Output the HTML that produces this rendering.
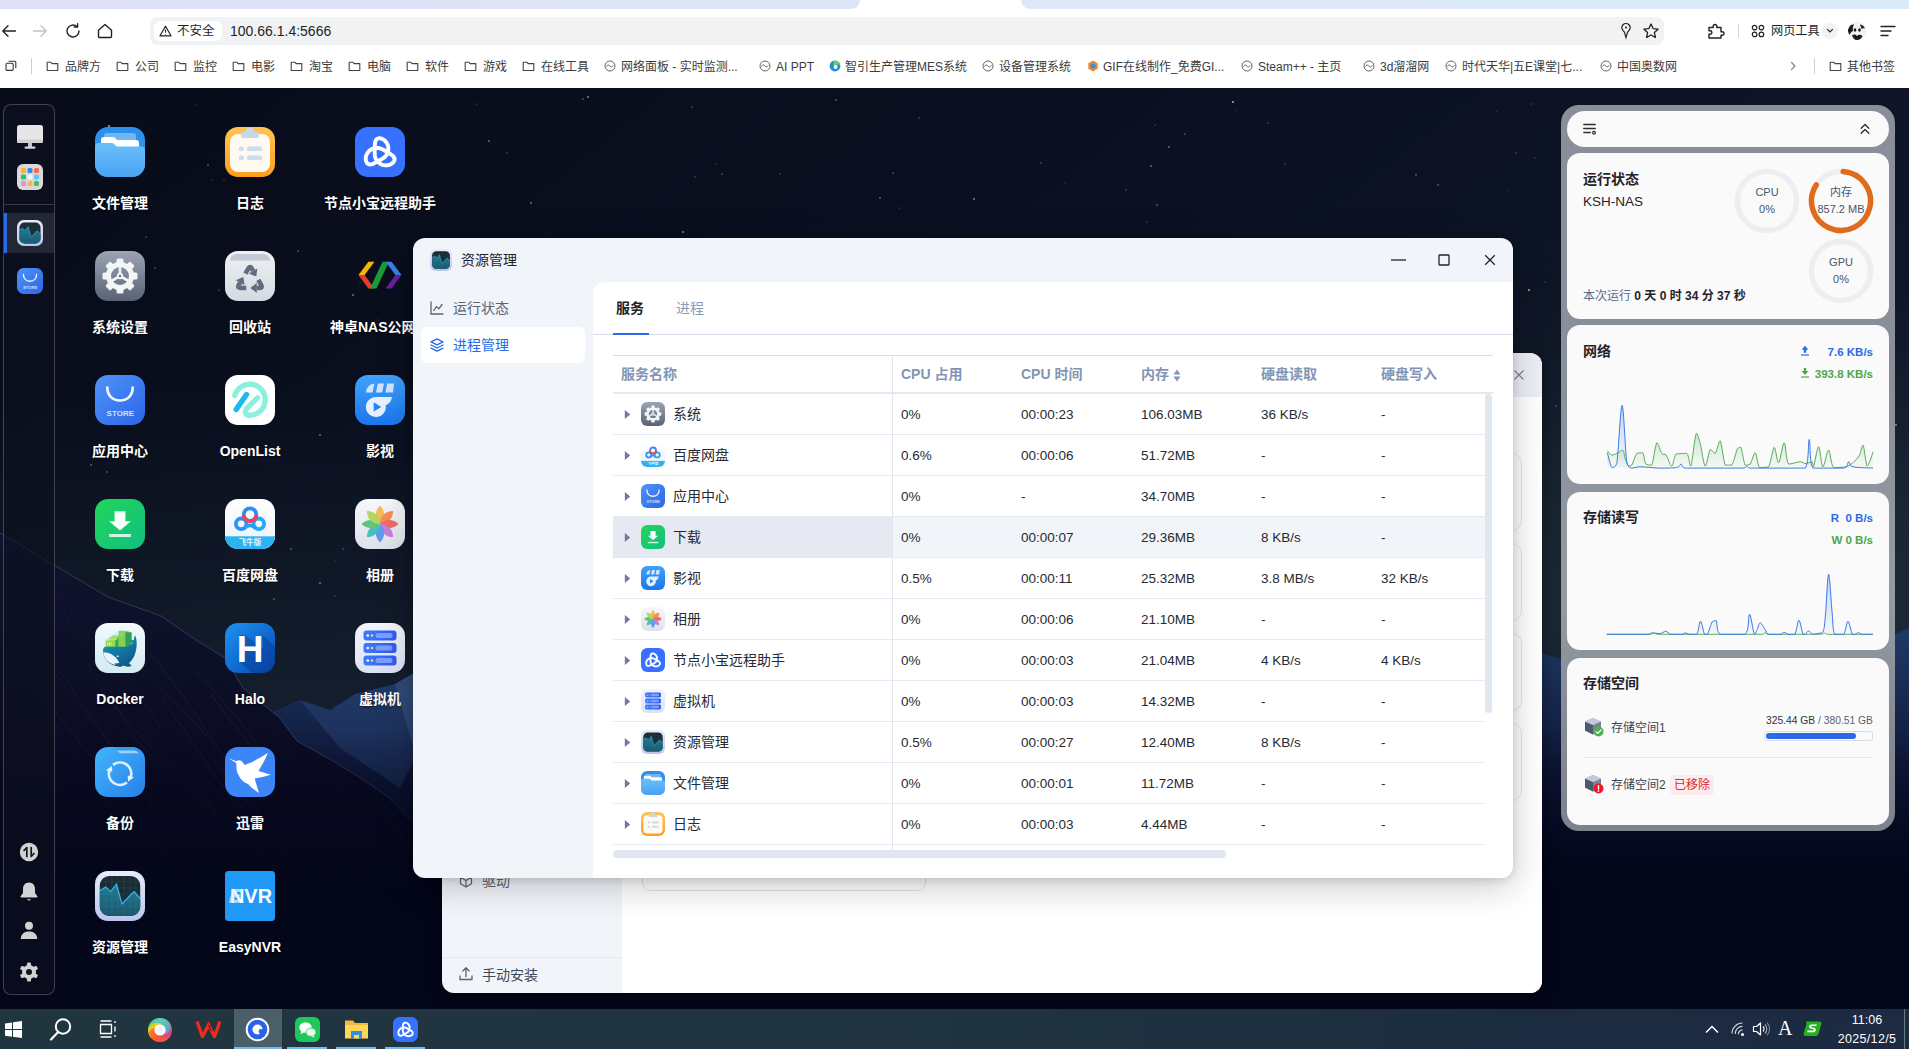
<!DOCTYPE html>
<html lang="zh-CN">
<head>
<meta charset="utf-8">
<title>资源管理</title>
<style>
*{box-sizing:border-box;margin:0;padding:0}
html,body{width:1909px;height:1049px;overflow:hidden}
body{position:relative;font-family:"Liberation Sans","Noto Sans CJK SC",sans-serif;font-size:14px;color:#1f2329;background:#070a18}
.abs{position:absolute}
svg{display:block}
/* ===== browser chrome ===== */
#chrome{position:absolute;left:0;top:0;width:1909px;height:88px;background:#fff}
#tabstrip{position:absolute;left:0;top:0;width:1909px;height:9px;background:#fff}
#tabstrip .l{position:absolute;left:0;top:0;width:860px;height:9px;background:linear-gradient(90deg,#e0e0f8,#dde6f9);border-bottom-right-radius:9px}
#tabstrip .r{position:absolute;left:1021px;top:0;width:888px;height:9px;background:linear-gradient(90deg,#dde8f9,#dbeaf7);border-bottom-left-radius:9px}
#addr{position:absolute;left:150px;top:17px;width:1514px;height:28px;border-radius:8px;background:#f1f2f4}
#addr .pill{position:absolute;left:4px;top:4px;width:68px;height:20px;border-radius:6px;background:#fff}
.tb{position:absolute;color:#1f1f1f;white-space:nowrap}
#bm{position:absolute;left:0;top:50px;width:1909px;height:38px;font-size:12px;color:#3c3c3c}
#bm span{position:absolute;top:9px;white-space:nowrap;line-height:16px}
#bm svg{position:absolute}
/* ===== desktop ===== */
#desk{position:absolute;left:0;top:88px;width:1909px;height:921px;overflow:hidden;background:#080b19}
#dock{position:absolute;left:3px;top:16px;width:52px;height:891px;border:1px solid rgba(255,255,255,.22);border-radius:8px;background:rgba(14,17,32,.6)}
.ico{position:absolute;width:50px;height:50px}
.lab{position:absolute;width:130px;text-align:center;color:#fff;font-weight:bold;font-size:14px;line-height:20px;white-space:nowrap;text-shadow:0 1px 2px rgba(0,0,0,.6)}

/* ===== windows ===== */
.win{position:absolute;border-radius:12px;background:#f1f4f9;overflow:hidden}
#appc{left:442px;top:265px;width:1100px;height:640px;box-shadow:0 4px 18px rgba(0,0,0,.35)}
#resw{left:413px;top:150px;width:1100px;height:640px;box-shadow:0 8px 36px rgba(0,0,0,.22),0 2px 8px rgba(0,0,0,.12)}
#resw .title{position:absolute;left:48px;top:12px;font-size:14px;line-height:20px;color:#1f2329}
.side{position:absolute;left:8px;width:164px;height:36px;border-radius:6px;font-size:14px;line-height:36px;color:#5a6473;padding-left:32px;white-space:nowrap}
.side svg{position:absolute;left:8px;top:10px}
.side.on{background:#fff;color:#2a6ae8}
#panel{position:absolute;left:180px;top:44px;width:920px;height:596px;background:#fff;border-top-left-radius:12px}
#tabs{position:absolute;left:0;top:0;width:920px;height:53px;border-bottom:1px solid #d6deeb}
#tabs span{position:absolute;top:16px;font-size:14px;line-height:20px}
#tbl{position:absolute;left:20px;top:73px;width:880px;height:496px;overflow:hidden;font-size:14px}
#tbl .hd{position:absolute;left:0;top:0;width:880px;height:39px;border-top:1px solid #d6deeb;border-bottom:2px solid #e3e8f1;color:#8395b3;font-weight:bold}
#tbl .hd span{position:absolute;top:8px;line-height:20px;white-space:nowrap}
.row{position:absolute;left:0;width:872px;height:41px;border-bottom:1px solid #e4e9f2}
.row span{position:absolute;top:10px;line-height:20px;white-space:nowrap;color:#262a33}
.row .n{left:60px}
.row .c1,.row .c2,.row .c3,.row .c4,.row .c5{font-size:13.5px;top:11px}
.row .c1{left:288px}.row .c2{left:408px}.row .c3{left:528px}.row .c4{left:648px}.row .c5{left:768px}
.row svg.ic{position:absolute;left:28px;top:8px;width:24px;height:24px}
.row svg.tri{position:absolute;left:11px;top:15px}
.row.sel{background:#f1f4f9}
.row.sel .nb{position:absolute;left:0;top:0;width:279px;height:40px;background:#e6e9f1}

/* ===== widget ===== */
#wid{position:absolute;left:1561px;top:17px;width:334px;height:726px;border-radius:18px;background:linear-gradient(180deg,#898e9a 0%,#8a909a 40%,#949ba2 68%,#858a93 85%,#7e828c 100%)}
.card{position:absolute;left:6px;width:322px;border-radius:13px;background:#fafafa}
.card .h{position:absolute;left:16px;font-weight:bold;font-size:14px;line-height:20px;color:#1f2329;white-space:nowrap}
.card .t{position:absolute;white-space:nowrap;line-height:16px;font-size:12px}
.ring{position:absolute;width:66px;height:66px;text-align:center;font-size:11px;color:#4a5568;line-height:17px}
.ring svg{position:absolute;left:0;top:0}
.ring div{position:relative;padding-top:16px}
/* ===== taskbar ===== */
#task{position:absolute;left:0;top:1009px;width:1909px;height:40px;background:linear-gradient(90deg,#20363f 0%,#20343f 45%,#1c2c40 80%,#1d2a42 100%);color:#fff}
#task svg{position:absolute}
.ul{position:absolute;top:38px;height:2px;background:#76b9ed}
</style>
</head>
<body>
<!-- SVG symbol library -->
<svg width="0" height="0" style="position:absolute">
<defs id="defs">
<linearGradient id="g-files" x1="0" y1="0" x2="0" y2="1"><stop offset="0" stop-color="#2b8fe9"/><stop offset="1" stop-color="#3a9af0"/></linearGradient>
<linearGradient id="g-files2" x1="0" y1="0" x2="0" y2="1"><stop offset="0" stop-color="#6ac0fb"/><stop offset="1" stop-color="#4aa2f2"/></linearGradient>
<linearGradient id="g-log" x1="0" y1="0" x2="0" y2="1"><stop offset="0" stop-color="#ffc455"/><stop offset="1" stop-color="#ff9d1c"/></linearGradient>
<linearGradient id="g-set" x1="0" y1="0" x2="0" y2="1"><stop offset="0" stop-color="#9aa4b5"/><stop offset="1" stop-color="#596375"/></linearGradient>
<linearGradient id="g-trash" x1="0" y1="0" x2="0" y2="1"><stop offset="0" stop-color="#eef1f4"/><stop offset="1" stop-color="#d3dae1"/></linearGradient>
<linearGradient id="g-store" x1="0" y1="0" x2="1" y2="1"><stop offset="0" stop-color="#4e93f9"/><stop offset="1" stop-color="#2c66e6"/></linearGradient>
<linearGradient id="g-video" x1="0" y1="0" x2="0" y2="1"><stop offset="0" stop-color="#3fa2fc"/><stop offset="1" stop-color="#1c76ee"/></linearGradient>
<linearGradient id="g-dl" x1="0" y1="0" x2="1" y2="1"><stop offset="0" stop-color="#22d65a"/><stop offset="1" stop-color="#0fbf80"/></linearGradient>
<linearGradient id="g-bd" x1="0" y1="0" x2="0" y2="1"><stop offset="0" stop-color="#ffffff"/><stop offset="1" stop-color="#e9f0fa"/></linearGradient>
<linearGradient id="g-photo" x1="0" y1="0" x2="0" y2="1"><stop offset="0" stop-color="#f7f8fa"/><stop offset="1" stop-color="#dde1e9"/></linearGradient>
<linearGradient id="g-docker" x1="0" y1="0" x2="0" y2="1"><stop offset="0" stop-color="#f2fafd"/><stop offset="1" stop-color="#d4ebf3"/></linearGradient>
<linearGradient id="g-whale" x1="0" y1="0" x2=".6" y2="1"><stop offset="0" stop-color="#1fa5bd"/><stop offset=".55" stop-color="#137aa3"/><stop offset="1" stop-color="#0f5a8c"/></linearGradient>
<linearGradient id="g-halo" x1="0" y1="0" x2="1" y2="1"><stop offset="0" stop-color="#1b93f5"/><stop offset="1" stop-color="#0848ad"/></linearGradient>
<linearGradient id="g-vm" x1="0" y1="0" x2="0" y2="1"><stop offset="0" stop-color="#f3f5fd"/><stop offset="1" stop-color="#dce1f4"/></linearGradient>
<linearGradient id="g-vmb" x1="0" y1="0" x2="1" y2="0"><stop offset="0" stop-color="#3f78ff"/><stop offset="1" stop-color="#2f5af0"/></linearGradient>
<linearGradient id="g-bak" x1="0" y1="0" x2="1" y2="1"><stop offset="0" stop-color="#43b5fb"/><stop offset="1" stop-color="#2680ea"/></linearGradient>
<linearGradient id="g-res" x1="0" y1="0" x2="0" y2="1"><stop offset="0" stop-color="#e8ecfb"/><stop offset="1" stop-color="#b9c5ec"/></linearGradient>
<linearGradient id="g-res2" x1="0" y1="0" x2="0" y2="1"><stop offset="0" stop-color="#1b2a33"/><stop offset="1" stop-color="#17333f"/></linearGradient>
<linearGradient id="g-res3" x1="0" y1="0" x2="0" y2="1"><stop offset="0" stop-color="#207d96"/><stop offset="1" stop-color="#1b566b"/></linearGradient>

<symbol id="i-files" viewBox="0 0 50 50"><rect width="50" height="50" rx="13" fill="url(#g-files)"/><rect x="9" y="6" width="32" height="12" rx="3" fill="#8cc8f8" opacity=".7"/><path d="M6 13a3 3 0 0 1 3-3h10l3 3h19a3 3 0 0 1 3 3v10H6z" fill="#fff"/><path d="M0 20a4 4 0 0 1 4-4h13c2.500 0 3.500 3.600 6 3.600h23a4 4 0 0 1 4 4V37a13 13 0 0 1-13 13H13A13 13 0 0 1 0 37z" fill="url(#g-files2)"/></symbol>

<symbol id="i-log" viewBox="0 0 50 50"><rect width="50" height="50" rx="13" fill="url(#g-log)"/><rect x="5" y="7" width="40" height="38" rx="8" fill="#fffaf1"/><path d="M16 8a3 3 0 0 1 3-3h1.500a4.500 4.500 0 0 1 9 0H31a3 3 0 0 1 3 3v1a2 2 0 0 1-2 2H18a2 2 0 0 1-2-2z" fill="#c7d8e6"/><g fill="#cbdeeb"><rect x="14" y="19.500" width="5" height="4.500" rx="1.500"/><rect x="22" y="19.500" width="15" height="4.500" rx="1.500"/><rect x="14" y="28.500" width="5" height="4.500" rx="1.500"/><rect x="22" y="28.500" width="15" height="4.500" rx="1.500"/></g></symbol>

<symbol id="i-jdxb" viewBox="0 0 50 50"><rect width="50" height="50" rx="13" fill="#3672ff"/><path d="M27.3 22.3 L28.2 22.7 L29.0 23.2 L29.8 23.7 L30.6 24.2 L31.4 24.6 L32.1 25.1 L32.8 25.5 L33.5 25.9 L34.1 26.3 L34.8 26.7 L35.4 27.1 L36.0 27.4 L36.5 27.8 L37.0 28.2 L37.5 28.6 L38.0 29.0 L38.3 29.4 L38.7 29.8 L39.0 30.3 L39.2 30.7 L39.4 31.2 L39.5 31.7 L39.5 32.2 L39.5 32.7 L39.4 33.3 L39.2 33.8 L38.9 34.4 L38.6 34.9 L38.1 35.5 L37.6 36.0 L37.0 36.5 L36.3 36.9 L35.6 37.3 L34.8 37.7 L33.9 38.0 L32.9 38.2 L31.9 38.3 L30.9 38.4 L29.8 38.3 L28.7 38.1 L27.6 37.9 L26.6 37.5 L25.6 37.0 L24.6 36.4 L23.7 35.6 L22.8 34.8 L22.1 33.9 L21.4 33.0 L20.9 32.0 L20.5 30.9 L20.1 29.9 L19.9 28.8 L19.8 27.7 L19.7 26.7 L19.7 25.7 L19.7 24.8 L19.7 23.9 L19.8 23.0 L19.8 22.1 L19.8 21.3 L19.8 20.5 L19.8 19.7 L19.8 18.9 L19.9 18.2 L19.9 17.5 L19.9 16.8 L20.0 16.2 L20.1 15.6 L20.2 15.0 L20.3 14.4 L20.5 13.9 L20.8 13.4 L21.0 13.0 L21.3 12.6 L21.7 12.2 L22.1 11.9 L22.6 11.7 L23.1 11.5 L23.6 11.3 L24.2 11.3 L24.8 11.3 L25.5 11.4 L26.2 11.5 L26.9 11.8 L27.7 12.1 L28.4 12.5 L29.1 13.0 L29.8 13.6 L30.5 14.3 L31.2 15.1 L31.7 15.9 L32.2 16.9 L32.7 17.9 L33.0 18.9 L33.2 20.0 L33.3 21.2 L33.3 22.3 L33.2 23.5 L33.0 24.6 L32.6 25.7 L32.2 26.8 L31.6 27.8 L30.9 28.7 L30.2 29.5 L29.4 30.3 L28.5 30.9 L27.7 31.5 L26.8 32.1 L26.0 32.5 L25.2 33.0 L24.4 33.4 L23.6 33.8 L22.9 34.2 L22.2 34.6 L21.5 35.0 L20.8 35.4 L20.2 35.7 L19.5 36.1 L18.9 36.4 L18.3 36.7 L17.7 36.9 L17.2 37.1 L16.6 37.3 L16.1 37.4 L15.5 37.5 L15.0 37.5 L14.5 37.4 L14.0 37.3 L13.5 37.1 L13.1 36.9 L12.7 36.6 L12.3 36.2 L11.9 35.7 L11.6 35.2 L11.3 34.6 L11.0 33.9 L10.9 33.2 L10.8 32.4 L10.7 31.6 L10.8 30.7 L10.9 29.8 L11.1 28.9 L11.5 27.9 L11.9 27.0 L12.4 26.1 L13.0 25.2 L13.7 24.4 L14.6 23.6 L15.5 22.9 L16.4 22.3 L17.5 21.8 L18.6 21.4 L19.7 21.1 L20.8 21.0 L22.0 20.9 L23.1 21.0 L24.2 21.2 L25.3 21.5 L26.3 21.8 L27.3 22.3Z" fill="none" stroke="#fff" stroke-width="3.900" stroke-linejoin="round"/></symbol>

<symbol id="i-set" viewBox="0 0 50 50"><rect width="50" height="50" rx="13" fill="url(#g-set)"/><g fill="#f4f5f7"><g id="teeth"><rect x="21.500" y="7.500" width="7" height="8" rx="1.500"/><rect x="21.500" y="34.500" width="7" height="8" rx="1.500"/><rect x="7.500" y="21.500" width="8" height="7" rx="1.500"/><rect x="34.500" y="21.500" width="8" height="7" rx="1.500"/></g><g transform="rotate(45 25 25)"><rect x="21.500" y="7.500" width="7" height="8" rx="1.500"/><rect x="21.500" y="34.500" width="7" height="8" rx="1.500"/><rect x="7.500" y="21.500" width="8" height="7" rx="1.500"/><rect x="34.500" y="21.500" width="8" height="7" rx="1.500"/></g></g><circle cx="25" cy="25" r="11.500" fill="none" stroke="#f4f5f7" stroke-width="5"/><g stroke="#f4f5f7" stroke-width="2.600" stroke-linecap="round"><path d="M25 25V14M25 25l9.500 5.500M25 25l-9.500 5.500"/></g><circle cx="25" cy="25" r="3.200" fill="#f4f5f7"/><circle cx="25" cy="25" r="1.300" fill="#6c7688"/></symbol>

<symbol id="i-trash" viewBox="0 0 50 50"><rect width="50" height="50" rx="13" fill="url(#g-trash)"/><path d="M5 9.500a6.500 6.500 0 0 1 6.500-6.500h27a6.500 6.500 0 0 1 6.500 6.500H5z" fill="#c3c8d3"/><g id="rc1"><path d="M20.4 22.6L23.0 18.1Q25 14.5 26.7 17.4L28.1 19.9" fill="none" stroke="#636c7e" stroke-width="4.600" stroke-linejoin="round"/><path d="M32.4 17.4L23.7 22.4L31.3 25.5z" fill="#636c7e"/></g><use href="#rc1" transform="rotate(120 25.00 29.50)"/><use href="#rc1" transform="rotate(240 25.00 29.50)"/></symbol>

<symbol id="i-sz" viewBox="0 0 50 50"><polygon points="13.4,10.7 19.5,10.7 9.6,24 3.5,24" fill="#f6b500"/><polygon points="3.5,24 9.6,24 19.5,37.5 13.4,37.5" fill="#e8392f"/><polygon points="27.5,10.7 34,10.7 21.5,37.5 15,37.5" fill="#1b9a3b"/><polygon points="30.5,10.7 36.6,10.7 46.5,24 40.4,24" fill="#3a7fe8"/><polygon points="40.4,24 46.5,24 36.6,37.5 30.5,37.5" fill="#6a1fa0"/></symbol>

<symbol id="i-store" viewBox="0 0 50 50"><rect width="50" height="50" rx="13" fill="url(#g-store)"/><path d="M12.300 12.500c0 7.500 5 13 12.700 13s12.700-5.500 12.700-13" fill="none" stroke="#f2f6ff" stroke-width="2.700" stroke-linecap="round"/><text x="25.300" y="40.500" text-anchor="middle" font-family="Liberation Sans,sans-serif" font-weight="bold" font-size="8" fill="#cfe0ff">STORE</text></symbol>

<symbol id="i-ol" viewBox="0 0 50 50"><rect width="50" height="50" rx="13" fill="#fff"/><path d="M9.800 20.500A15.500 15.500 0 1 1 24.500 40.200C20 40.200 19.500 36.500 22 33.200L32.500 22.800" fill="none" stroke="#8cf0df" stroke-width="5.400" stroke-linecap="round" stroke-linejoin="round"/><path d="M11.200 34.500L21.500 19.500" fill="none" stroke="#1cb8f2" stroke-width="5.400" stroke-linecap="round"/></symbol>

<symbol id="i-video" viewBox="0 0 50 50"><rect width="50" height="50" rx="13" fill="url(#g-video)"/><path d="M21.200 22h15.800c-1 5-3.200 7-6.300 8.200a10 10 0 1 1-9.500-8.200z" fill="#e6f0ff"/><path d="M18.700 27.300l7.600 4.600-7.600 4.600z" fill="#2585f3"/><path d="M11 17.500c.5-5 3.200-8.300 8.400-9L17.500 17.500zM22.800 8.500h6.200l-1.800 9h-6.200zM32.200 8.500h6.800l-1 9h-7.600z" fill="#d2e5ff"/></symbol>

<symbol id="i-dl" viewBox="0 0 50 50"><rect width="50" height="50" rx="13" fill="url(#g-dl)"/><path d="M19.600 12.300h10.800v10h5.500L25 31.500 14.100 22.300h5.500z" fill="#f4fff9"/><rect x="14.100" y="35" width="21.800" height="3" fill="#d0f7e2"/></symbol>

<symbol id="i-bd" viewBox="0 0 50 50"><clipPath id="c-bd"><rect width="50" height="50" rx="13"/></clipPath><g clip-path="url(#c-bd)"><rect width="50" height="50" fill="url(#g-bd)"/><rect y="37.300" width="50" height="13" fill="#2cb4f2"/></g><g fill="none" stroke-width="3.800"><circle cx="16.200" cy="24.800" r="5.300" stroke="#2a93f6"/><circle cx="33.800" cy="24.800" r="5.300" stroke="#22aaf6"/><path d="M19.500 29c3.200-3.600 7.800-3.600 11 0" stroke="#27a0f6"/><circle cx="25" cy="15.600" r="6.300" stroke="#2f8cf5"/><path d="M18.700 15.800a6.300 6.300 0 0 0 12.600 0" stroke="#f2425a"/></g><text x="25" y="46.300" text-anchor="middle" font-family="Liberation Sans,Noto Sans CJK SC,sans-serif" font-weight="bold" font-size="7.500" fill="#e4f5ff">飞牛版</text></symbol>

<symbol id="i-photo" viewBox="0 0 50 50"><rect width="50" height="50" rx="13" fill="url(#g-photo)"/><g opacity=".86"><path d="M25 6.500C30.500 12 30.500 19.500 25 25.500C19.500 19.500 19.500 12 25 6.500z" fill="#f8b43a" transform="rotate(0 25 25)"/><path d="M25 6.500C30.500 12 30.500 19.500 25 25.500C19.500 19.500 19.500 12 25 6.500z" fill="#f5813c" transform="rotate(45 25 25)"/><path d="M25 6.500C30.500 12 30.500 19.500 25 25.500C19.500 19.500 19.500 12 25 6.500z" fill="#f0554c" transform="rotate(90 25 25)"/><path d="M25 6.500C30.500 12 30.500 19.500 25 25.500C19.500 19.500 19.500 12 25 6.500z" fill="#c56edb" transform="rotate(135 25 25)"/><path d="M25 6.500C30.500 12 30.500 19.500 25 25.500C19.500 19.500 19.500 12 25 6.500z" fill="#4d8cf2" transform="rotate(180 25 25)"/><path d="M25 6.500C30.500 12 30.500 19.500 25 25.500C19.500 19.500 19.500 12 25 6.500z" fill="#35b6b4" transform="rotate(225 25 25)"/><path d="M25 6.500C30.500 12 30.500 19.500 25 25.500C19.500 19.500 19.500 12 25 6.500z" fill="#47c068" transform="rotate(270 25 25)"/><path d="M25 6.500C30.500 12 30.500 19.500 25 25.500C19.500 19.500 19.500 12 25 6.500z" fill="#a8d24a" transform="rotate(315 25 25)"/></g></symbol>
<symbol id="i-docker" viewBox="0 0 50 50"><rect width="50" height="50" rx="13" fill="url(#g-docker)"/><polygon points="9.500,17 23.500,7.500 33,11 33,24 9.500,24" fill="#bfe6f8" opacity=".55"/><polygon points="14,15.500 18,12.800 25,12.800 25,24 14,24" fill="#55bd5a"/><polygon points="14,15.500 18,12.800 25,12.800 21,15.500" fill="#a5e06a"/><rect x="10.700" y="17.500" width="9.600" height="6.500" fill="#9ad94e"/><polygon points="10.700,17.500 14,15.500 23.500,15.500 20.300,17.500" fill="#bcea72"/><polygon points="20.300,17.500 23.500,15.500 23.500,24 20.300,24" fill="#3aa85e"/><g stroke="#e9fbd8" stroke-width=".7"><path d="M12.800 19.500v3M14.500 19.500v3M16.200 19.500v3"/></g><rect x="23.700" y="7.800" width="6.500" height="17" fill="#84d152"/><polygon points="30.200,7.800 36.700,9.500 36.700,25 30.200,25" fill="#2f9f5e"/><polygon points="23.700,7.800 30.200,7.800 36.700,9.500 30,9.300" fill="#a8e070" opacity=".7"/><circle cx="26.800" cy="11.500" r="1.300" fill="none" stroke="#b8ec8a" stroke-width=".5"/><path d="M8 27.500c0-2.500 1-3.800 3-3.800h20c4 0 6.500-2.500 7.500-6l1.500-5.700c1.500 3 2 7 1.500 12-.8 8-4 14-9.500 17.500-2 1.200-5 1.800-8 1.800-9 0-16-7-16-15.800z" fill="url(#g-whale)"/><path d="M39.600 17.600c-2-1.200-4.200-.6-5.200 1.200 1.900.2 3.500.9 4.500 2.200z" fill="#1a86aa"/><path d="M8.300 29.300c.5 6 5 11 11 12.500 2 .3 4-.3 5.400-1.100-2.700-6.700-9-11.400-16.400-11.400z" fill="#eaf4ff"/><ellipse cx="22.700" cy="33.300" rx="1.100" ry=".8" fill="#fff"/><path d="M19.500 40.500c1.500 2.600 5 3.900 7.700 2.700-1-1-1.600-2-1.800-3.200zM28.500 42c2 2 5.800 2.400 8.200.4-1.500-.8-2.500-2-3-3.500z" fill="#0e5f88"/></symbol>

<symbol id="i-halo" viewBox="0 0 50 50"><clipPath id="c-halo"><rect width="50" height="50" rx="13"/></clipPath><rect width="50" height="50" rx="13" fill="url(#g-halo)"/><g clip-path="url(#c-halo)"><path d="M14 12l6 0 18 14V12l28 28v20H38L14 38z" fill="#063a94" opacity=".45"/></g><text x="25" y="38.500" text-anchor="middle" font-family="Liberation Sans,sans-serif" font-weight="bold" font-size="37" fill="#fff">H</text></symbol>

<symbol id="i-vm" viewBox="0 0 50 50"><rect width="50" height="50" rx="13" fill="url(#g-vm)"/><g><rect x="8.500" y="7.500" width="33" height="10" rx="3" fill="url(#g-vmb)"/><rect x="8.500" y="20" width="33" height="10" rx="3" fill="url(#g-vmb)"/><rect x="8.500" y="32.500" width="33" height="10" rx="3" fill="url(#g-vmb)"/><g fill="#7c9dff"><rect x="20.500" y="10" width="17" height="5" rx="2.500"/><rect x="20.500" y="22.500" width="17" height="5" rx="2.500"/><rect x="20.500" y="35" width="17" height="5" rx="2.500"/></g><g fill="#fff"><circle cx="12.800" cy="12.500" r="1.300"/><circle cx="12.800" cy="25" r="1.300"/><circle cx="12.800" cy="37.500" r="1.300"/></g><g fill="#c8f05a"><circle cx="17" cy="12.500" r="1.300"/><circle cx="17" cy="25" r="1.300"/><circle cx="17" cy="37.500" r="1.300"/></g></g></symbol>

<symbol id="i-bak" viewBox="0 0 50 50"><clipPath id="c-bak"><rect width="50" height="50" rx="13"/></clipPath><rect width="50" height="50" rx="13" fill="url(#g-bak)"/><g clip-path="url(#c-bak)"><path d="M19 0h31v9c-2-3-5-4-9-4H26c-3 0-4-2-7-5z" fill="#2f8ff0" opacity=".55"/><path d="M22 3.500h17c2 0 3.500 1 4.500 2.800H25z" fill="#bfe4ff" opacity=".75"/></g><g fill="none" stroke="#e3f1ff" stroke-width="2.700"><path d="M18.10 17.87A11.2 11.2 0 0 1 35.77 29.79"/><path d="M31.90 35.53A11.2 11.2 0 0 1 14.23 23.61"/></g><path d="M39.07 30.21L32.67 28.61L33.06 34.48z" fill="#e3f1ff"/><path d="M10.93 23.19L17.33 24.79L16.94 18.92z" fill="#e3f1ff"/></symbol>

<symbol id="i-xl" viewBox="0 0 50 50"><rect width="50" height="50" rx="13" fill="#3d86f8"/><path d="M3.300 11.300L11.500 14.200C12.500 13 14.500 12.800 16 13.800C17.500 15 18.500 16.500 19.800 17.900C27 15.500 35 11 42.900 5.800C40.500 12 37 18 33.500 24C37.500 25 41.500 26.200 45.600 27.800C40 29.500 35 30.500 29.700 31.600C31 36.500 32.500 41.500 34 45.900C30 43.500 26 40.500 23 37.100C19 35.500 16 33 14.300 29.500C12.500 26.500 11.300 23.500 11.500 20.700C11.500 18.500 11.300 17 11 15.700Z" fill="#fff"/></symbol>

<symbol id="i-res" viewBox="0 0 50 50"><clipPath id="c-res"><rect x="4.800" y="5" width="40.400" height="40" rx="9.500"/></clipPath><rect width="50" height="50" rx="13" fill="url(#g-res)"/><rect x="4.800" y="5" width="40.400" height="40" rx="9.500" fill="url(#g-res2)"/><g clip-path="url(#c-res)"><path d="M4 20.500l6.700-4.400 5 4.400 5.700-7.500L27 33l12-12.500 7 8V46H4z" fill="url(#g-res3)"/><path d="M4 20.500l6.700-4.400 5 4.400 5.700-7.500L27 33l12-12.500 7 8" fill="none" stroke="#35b4e4" stroke-width="1.200" stroke-linejoin="round"/><g stroke="#7fb0b8" stroke-width=".35" opacity=".3"><path d="M4 11h42M4 17h42M4 23h42M4 29h42M4 35h42M4 41h42M11 4v42M17 4v42M23 4v42M29 4v42M35 4v42M41 4v42"/></g></g></symbol>

<symbol id="i-nvr" viewBox="0 0 50 50"><rect width="50" height="50" rx="3.500" fill="#2199f7"/><text x="5" y="31.800" textLength="42" lengthAdjust="spacingAndGlyphs" font-family="Liberation Sans,sans-serif" font-weight="bold" font-size="19.300" fill="#fff">NVR</text><path d="M4 31.800l3.500-13.800h10l-.8 3h-6l-.6 2.400h5l-.7 2.800h-5l-.7 2.600h6.200l-.7 3z" fill="#dff0ff" opacity=".75"/></symbol>

<symbol id="i-mon" viewBox="0 0 26 26"><rect x="0" y="1" width="26" height="18" rx="2.500" fill="#e6e6e6"/><rect x="0" y="15.500" width="26" height="3.500" rx="1.500" fill="#d0d0d0"/><rect x="11" y="19" width="4" height="4" fill="#c4c4c4"/><rect x="7.500" y="22.500" width="11" height="2.200" rx="1.100" fill="#d6d6d6"/></symbol>

<symbol id="i-grid" viewBox="0 0 26 26"><rect width="26" height="26" rx="6" fill="#d9d9d9"/><rect x="4" y="4" width="5" height="5" rx="1.500" fill="#ffb02e"/><rect x="10.500" y="4" width="5" height="5" rx="1.500" fill="#2f86f6"/><rect x="17" y="4" width="5" height="5" rx="1.500" fill="#ff6b4a"/><rect x="4" y="10.500" width="5" height="5" rx="1.500" fill="#26c766"/><rect x="10.500" y="10.500" width="5" height="5" rx="1.500" fill="#f2f6fb"/><rect x="17" y="10.500" width="5" height="5" rx="1.500" fill="#5fc4f7"/><rect x="4" y="17" width="5" height="5" rx="1.500" fill="#f28ad0"/><rect x="10.500" y="17" width="5" height="5" rx="1.500" fill="#ffb347"/><rect x="17" y="17" width="5" height="5" rx="1.500" fill="#3ec45f"/></symbol>
</defs>
</svg>

<div id="desk">
<svg class="abs" style="left:0;top:0" width="1909" height="921" viewBox="0 0 1909 921">
<defs>
<linearGradient id="sky" x1="0" y1="0" x2="1" y2=".6"><stop offset="0" stop-color="#080b18"/><stop offset=".5" stop-color="#0b1122"/><stop offset="1" stop-color="#101a2c"/></linearGradient><linearGradient id="hz" x1="0" y1="0" x2="0" y2="1"><stop offset="0" stop-color="#16212f" stop-opacity="0"/><stop offset="1" stop-color="#16212f" stop-opacity=".85"/></linearGradient><radialGradient id="glow" cx="1800" cy="580" r="1" gradientUnits="userSpaceOnUse" gradientTransform="translate(1800 580) scale(1500 480) translate(-1800 -580)"><stop offset="0" stop-color="#2a3b42" stop-opacity="1"/><stop offset=".35" stop-color="#1e2c35" stop-opacity=".8"/><stop offset=".7" stop-color="#141e2a" stop-opacity=".4"/><stop offset="1" stop-color="#0d1322" stop-opacity="0"/></radialGradient>
<linearGradient id="mt1" x1="0" y1="0" x2="0" y2="1"><stop offset="0" stop-color="#11142e"/><stop offset=".5" stop-color="#0a0b22"/><stop offset="1" stop-color="#04051a"/></linearGradient>
<linearGradient id="mt2" x1="0" y1="0" x2="0" y2="1"><stop offset="0" stop-color="#203a66"/><stop offset=".35" stop-color="#101a3c"/><stop offset=".7" stop-color="#060920"/><stop offset="1" stop-color="#05061a"/></linearGradient>
<linearGradient id="fade" x1="0" y1="0" x2="0" y2="1"><stop offset="0" stop-color="#04061a" stop-opacity="0"/><stop offset="1" stop-color="#04061a" stop-opacity="1"/></linearGradient>
</defs>
<rect width="1909" height="921" fill="url(#sky)"/><rect width="1909" height="921" fill="url(#glow)"/><rect y="300" width="1909" height="330" fill="url(#hz)"/>
<circle cx="986" cy="476" r="0.8" fill="#cfd6e6" opacity="0.5"/><circle cx="438" cy="524" r="0.8" fill="#cfd6e6" opacity="0.5"/><circle cx="252" cy="457" r="0.7" fill="#cfd6e6" opacity="0.5"/><circle cx="245" cy="551" r="0.5" fill="#cfd6e6" opacity="0.8"/><circle cx="987" cy="161" r="1.0" fill="#cfd6e6" opacity="0.35"/><circle cx="1763" cy="541" r="0.5" fill="#cfd6e6" opacity="0.35"/><circle cx="133" cy="194" r="0.6" fill="#cfd6e6" opacity="0.35"/><circle cx="1653" cy="475" r="0.7" fill="#cfd6e6" opacity="0.8"/><circle cx="1270" cy="200" r="1.0" fill="#cfd6e6" opacity="0.5"/><circle cx="1371" cy="301" r="0.8" fill="#cfd6e6" opacity="0.35"/><circle cx="1416" cy="87" r="0.8" fill="#cfd6e6" opacity="0.6"/><circle cx="893" cy="85" r="0.7" fill="#cfd6e6" opacity="0.6"/><circle cx="1612" cy="235" r="1.0" fill="#cfd6e6" opacity="0.6"/><circle cx="120" cy="71" r="1.0" fill="#cfd6e6" opacity="0.35"/><circle cx="880" cy="110" r="0.7" fill="#cfd6e6" opacity="0.8"/><circle cx="196" cy="17" r="0.5" fill="#cfd6e6" opacity="0.5"/><circle cx="489" cy="53" r="0.8" fill="#cfd6e6" opacity="0.8"/><circle cx="1511" cy="406" r="0.8" fill="#cfd6e6" opacity="0.35"/><circle cx="1219" cy="203" r="0.7" fill="#cfd6e6" opacity="0.6"/><circle cx="238" cy="318" r="0.7" fill="#cfd6e6" opacity="0.35"/><circle cx="899" cy="120" r="0.6" fill="#cfd6e6" opacity="0.5"/><circle cx="1507" cy="103" r="0.5" fill="#cfd6e6" opacity="0.35"/><circle cx="1012" cy="498" r="0.6" fill="#cfd6e6" opacity="0.5"/><circle cx="976" cy="521" r="0.6" fill="#cfd6e6" opacity="0.5"/><circle cx="918" cy="392" r="0.5" fill="#cfd6e6" opacity="0.8"/><circle cx="921" cy="217" r="0.5" fill="#cfd6e6" opacity="0.6"/><circle cx="1830" cy="311" r="0.5" fill="#cfd6e6" opacity="0.5"/><circle cx="443" cy="403" r="1.0" fill="#cfd6e6" opacity="0.35"/><circle cx="146" cy="149" r="0.6" fill="#cfd6e6" opacity="0.8"/><circle cx="588" cy="9" r="1.0" fill="#cfd6e6" opacity="0.6"/><circle cx="1760" cy="303" r="0.8" fill="#cfd6e6" opacity="0.35"/><circle cx="212" cy="92" r="0.6" fill="#cfd6e6" opacity="0.5"/><circle cx="91" cy="377" r="0.7" fill="#cfd6e6" opacity="0.8"/><circle cx="320" cy="495" r="1.0" fill="#cfd6e6" opacity="0.5"/><circle cx="1834" cy="395" r="0.6" fill="#cfd6e6" opacity="0.5"/><circle cx="696" cy="233" r="1.0" fill="#cfd6e6" opacity="0.5"/><circle cx="1545" cy="194" r="0.6" fill="#cfd6e6" opacity="0.5"/><circle cx="1466" cy="397" r="0.8" fill="#cfd6e6" opacity="0.35"/><circle cx="923" cy="48" r="0.5" fill="#cfd6e6" opacity="0.35"/><circle cx="582" cy="244" r="0.8" fill="#cfd6e6" opacity="0.6"/><circle cx="921" cy="502" r="0.7" fill="#cfd6e6" opacity="0.5"/><circle cx="1535" cy="70" r="0.6" fill="#cfd6e6" opacity="0.5"/><circle cx="1041" cy="75" r="0.7" fill="#cfd6e6" opacity="0.5"/><circle cx="477" cy="16" r="0.5" fill="#cfd6e6" opacity="0.6"/><circle cx="902" cy="456" r="0.6" fill="#cfd6e6" opacity="0.35"/><circle cx="155" cy="180" r="0.7" fill="#cfd6e6" opacity="0.6"/><circle cx="1147" cy="134" r="0.5" fill="#cfd6e6" opacity="0.6"/><circle cx="343" cy="461" r="0.7" fill="#cfd6e6" opacity="0.5"/><circle cx="1268" cy="35" r="0.5" fill="#cfd6e6" opacity="0.8"/><circle cx="792" cy="319" r="0.5" fill="#cfd6e6" opacity="0.35"/><circle cx="1285" cy="76" r="0.8" fill="#cfd6e6" opacity="0.35"/><circle cx="1556" cy="318" r="0.7" fill="#cfd6e6" opacity="0.5"/><circle cx="208" cy="77" r="0.8" fill="#cfd6e6" opacity="0.6"/><circle cx="1569" cy="45" r="0.6" fill="#cfd6e6" opacity="0.6"/><circle cx="780" cy="86" r="0.8" fill="#cfd6e6" opacity="0.35"/><circle cx="1844" cy="427" r="0.5" fill="#cfd6e6" opacity="0.8"/><circle cx="1233" cy="14" r="1.0" fill="#cfd6e6" opacity="0.8"/><circle cx="836" cy="12" r="1.0" fill="#cfd6e6" opacity="0.35"/><circle cx="224" cy="92" r="0.5" fill="#cfd6e6" opacity="0.6"/><circle cx="1861" cy="426" r="0.7" fill="#cfd6e6" opacity="0.8"/><circle cx="1565" cy="468" r="0.8" fill="#cfd6e6" opacity="0.8"/><circle cx="1776" cy="554" r="0.5" fill="#cfd6e6" opacity="0.35"/><circle cx="695" cy="89" r="0.8" fill="#cfd6e6" opacity="0.35"/><circle cx="531" cy="115" r="0.8" fill="#cfd6e6" opacity="0.8"/><circle cx="583" cy="11" r="0.7" fill="#cfd6e6" opacity="0.6"/><circle cx="353" cy="207" r="1.0" fill="#cfd6e6" opacity="0.5"/><circle cx="1603" cy="350" r="0.8" fill="#cfd6e6" opacity="0.8"/><circle cx="1886" cy="247" r="0.7" fill="#cfd6e6" opacity="0.8"/><circle cx="1423" cy="256" r="0.6" fill="#cfd6e6" opacity="0.8"/><circle cx="1706" cy="205" r="0.6" fill="#cfd6e6" opacity="0.8"/><circle cx="509" cy="324" r="0.6" fill="#cfd6e6" opacity="0.5"/><circle cx="335" cy="508" r="0.7" fill="#cfd6e6" opacity="0.35"/><circle cx="1516" cy="65" r="0.7" fill="#cfd6e6" opacity="0.5"/><circle cx="291" cy="461" r="0.8" fill="#cfd6e6" opacity="0.6"/><circle cx="498" cy="423" r="0.8" fill="#cfd6e6" opacity="0.8"/><circle cx="1436" cy="322" r="1.0" fill="#cfd6e6" opacity="0.8"/><circle cx="716" cy="76" r="0.5" fill="#cfd6e6" opacity="0.6"/><circle cx="1847" cy="42" r="0.7" fill="#cfd6e6" opacity="0.6"/><circle cx="692" cy="19" r="0.6" fill="#cfd6e6" opacity="0.8"/><circle cx="991" cy="194" r="0.5" fill="#cfd6e6" opacity="0.6"/><circle cx="546" cy="144" r="0.5" fill="#cfd6e6" opacity="0.35"/><circle cx="974" cy="111" r="1.0" fill="#cfd6e6" opacity="0.6"/><circle cx="219" cy="202" r="0.6" fill="#cfd6e6" opacity="0.8"/><circle cx="584" cy="182" r="0.5" fill="#cfd6e6" opacity="0.8"/><circle cx="1155" cy="37" r="0.6" fill="#cfd6e6" opacity="0.5"/><circle cx="617" cy="354" r="1.0" fill="#cfd6e6" opacity="0.5"/><circle cx="865" cy="229" r="0.5" fill="#cfd6e6" opacity="0.8"/><circle cx="1888" cy="397" r="0.6" fill="#cfd6e6" opacity="0.8"/><circle cx="988" cy="201" r="0.5" fill="#cfd6e6" opacity="0.8"/><circle cx="1186" cy="514" r="0.7" fill="#cfd6e6" opacity="0.8"/><circle cx="728" cy="209" r="0.5" fill="#cfd6e6" opacity="0.35"/><circle cx="496" cy="248" r="0.8" fill="#cfd6e6" opacity="0.35"/><circle cx="694" cy="549" r="0.7" fill="#cfd6e6" opacity="0.6"/><circle cx="1531" cy="16" r="0.7" fill="#cfd6e6" opacity="0.35"/><circle cx="136" cy="451" r="0.7" fill="#cfd6e6" opacity="0.8"/><circle cx="1633" cy="281" r="0.8" fill="#cfd6e6" opacity="0.35"/><circle cx="507" cy="65" r="0.8" fill="#cfd6e6" opacity="0.35"/><circle cx="414" cy="545" r="0.7" fill="#cfd6e6" opacity="0.5"/><circle cx="1023" cy="152" r="1.0" fill="#cfd6e6" opacity="0.8"/><circle cx="1862" cy="504" r="1.0" fill="#cfd6e6" opacity="0.35"/><circle cx="1612" cy="226" r="0.8" fill="#cfd6e6" opacity="0.6"/><circle cx="1762" cy="168" r="1.0" fill="#cfd6e6" opacity="0.6"/><circle cx="698" cy="390" r="1.0" fill="#cfd6e6" opacity="0.5"/><circle cx="683" cy="144" r="1.0" fill="#cfd6e6" opacity="0.6"/><circle cx="1233" cy="509" r="0.6" fill="#cfd6e6" opacity="0.8"/><circle cx="1157" cy="117" r="1.0" fill="#cfd6e6" opacity="0.35"/><circle cx="1299" cy="386" r="0.5" fill="#cfd6e6" opacity="0.35"/><circle cx="1116" cy="410" r="1.0" fill="#cfd6e6" opacity="0.35"/><circle cx="1065" cy="95" r="0.6" fill="#cfd6e6" opacity="0.35"/><circle cx="1163" cy="469" r="0.8" fill="#cfd6e6" opacity="0.8"/><circle cx="611" cy="252" r="0.8" fill="#cfd6e6" opacity="0.8"/><circle cx="320" cy="347" r="0.8" fill="#cfd6e6" opacity="0.8"/><circle cx="1135" cy="324" r="0.5" fill="#cfd6e6" opacity="0.5"/><circle cx="919" cy="30" r="0.7" fill="#cfd6e6" opacity="0.5"/><circle cx="1497" cy="23" r="0.5" fill="#cfd6e6" opacity="0.5"/><circle cx="378" cy="232" r="0.5" fill="#cfd6e6" opacity="0.6"/><circle cx="719" cy="363" r="0.6" fill="#cfd6e6" opacity="0.8"/><circle cx="274" cy="511" r="1.0" fill="#cfd6e6" opacity="0.35"/><circle cx="1804" cy="522" r="1.0" fill="#cfd6e6" opacity="0.6"/><circle cx="1529" cy="202" r="1.0" fill="#cfd6e6" opacity="0.8"/><circle cx="107" cy="384" r="0.8" fill="#cfd6e6" opacity="0.5"/><circle cx="1162" cy="209" r="1.0" fill="#cfd6e6" opacity="0.5"/><circle cx="1144" cy="221" r="1.0" fill="#cfd6e6" opacity="0.5"/><circle cx="536" cy="355" r="0.6" fill="#cfd6e6" opacity="0.6"/><circle cx="1295" cy="322" r="0.6" fill="#cfd6e6" opacity="0.5"/><circle cx="1653" cy="199" r="0.5" fill="#cfd6e6" opacity="0.5"/><circle cx="1880" cy="245" r="0.6" fill="#cfd6e6" opacity="0.35"/><circle cx="591" cy="397" r="0.5" fill="#cfd6e6" opacity="0.8"/><circle cx="1764" cy="431" r="1.0" fill="#cfd6e6" opacity="0.5"/><circle cx="470" cy="412" r="0.5" fill="#cfd6e6" opacity="0.35"/><circle cx="471" cy="366" r="0.7" fill="#cfd6e6" opacity="0.35"/><circle cx="1503" cy="517" r="0.7" fill="#cfd6e6" opacity="0.5"/><circle cx="1704" cy="72" r="0.8" fill="#cfd6e6" opacity="0.35"/><circle cx="109" cy="38" r="1.0" fill="#cfd6e6" opacity="0.8"/><circle cx="360" cy="194" r="0.6" fill="#cfd6e6" opacity="0.35"/><circle cx="477" cy="176" r="0.6" fill="#cfd6e6" opacity="0.6"/><circle cx="1438" cy="97" r="1.0" fill="#cfd6e6" opacity="0.35"/><circle cx="335" cy="473" r="0.5" fill="#cfd6e6" opacity="0.35"/><circle cx="729" cy="400" r="0.8" fill="#cfd6e6" opacity="0.8"/><circle cx="1115" cy="363" r="0.8" fill="#cfd6e6" opacity="0.5"/><circle cx="1290" cy="382" r="0.5" fill="#cfd6e6" opacity="0.35"/><circle cx="1789" cy="205" r="0.6" fill="#cfd6e6" opacity="0.8"/><circle cx="989" cy="368" r="0.7" fill="#cfd6e6" opacity="0.8"/><circle cx="459" cy="169" r="0.5" fill="#cfd6e6" opacity="0.35"/><circle cx="722" cy="86" r="0.8" fill="#cfd6e6" opacity="0.5"/><circle cx="1092" cy="349" r="0.7" fill="#cfd6e6" opacity="0.6"/><circle cx="298" cy="163" r="0.8" fill="#cfd6e6" opacity="0.5"/><circle cx="1896" cy="337" r="1.0" fill="#cfd6e6" opacity="0.6"/><circle cx="1631" cy="442" r="0.6" fill="#cfd6e6" opacity="0.8"/><circle cx="483" cy="189" r="0.5" fill="#cfd6e6" opacity="0.6"/><circle cx="677" cy="480" r="0.5" fill="#cfd6e6" opacity="0.35"/><circle cx="1878" cy="364" r="1.0" fill="#cfd6e6" opacity="0.35"/><circle cx="535" cy="279" r="0.7" fill="#cfd6e6" opacity="0.6"/><circle cx="502" cy="415" r="1.0" fill="#cfd6e6" opacity="0.5"/><circle cx="1151" cy="78" r="0.8" fill="#cfd6e6" opacity="0.8"/><circle cx="1375" cy="218" r="0.5" fill="#cfd6e6" opacity="0.8"/><circle cx="1237" cy="23" r="0.5" fill="#cfd6e6" opacity="0.35"/><circle cx="1573" cy="242" r="0.7" fill="#cfd6e6" opacity="0.8"/><circle cx="882" cy="516" r="0.5" fill="#cfd6e6" opacity="0.5"/><circle cx="1387" cy="384" r="0.5" fill="#cfd6e6" opacity="0.35"/><circle cx="589" cy="256" r="0.7" fill="#cfd6e6" opacity="0.6"/><circle cx="1186" cy="553" r="1.0" fill="#cfd6e6" opacity="0.8"/><circle cx="1126" cy="102" r="0.8" fill="#cfd6e6" opacity="0.35"/><circle cx="1185" cy="46" r="0.8" fill="#cfd6e6" opacity="0.5"/><circle cx="850" cy="483" r="0.6" fill="#cfd6e6" opacity="0.8"/><circle cx="1169" cy="59" r="0.8" fill="#cfd6e6" opacity="0.8"/><circle cx="921" cy="291" r="1.0" fill="#cfd6e6" opacity="0.8"/><circle cx="1284" cy="319" r="0.7" fill="#cfd6e6" opacity="0.6"/><circle cx="1049" cy="276" r="1.0" fill="#cfd6e6" opacity="0.6"/>
<polygon points="270,625 300,612 330,622 355,606 395,596 440,570 600,585 900,560 1200,575 1500,560 1545,566 1620,590 1700,575 1800,590 1909,540 1909,921 270,921" fill="url(#mt2)"/>
<polygon points="300,612 330,622 355,606 395,596 440,570 470,600 430,640 400,700 340,660" fill="#2a4a7c" opacity=".45"/>
<polygon points="395,596 440,570 455,640 425,700" fill="#5b7fb0" opacity=".25"/>
<polygon points="0,445 54,477 108,509 161,528 196,552 225,570 243,600 261,615 279,629 297,653 333,673 362,691 388,709 430,752 480,810 540,921 0,921" fill="url(#mt1)"/>
<polyline points="0,445 54,477 108,509 161,528 196,552 225,570 243,600 261,615 279,629 297,653 333,673 362,691 388,709 430,752 480,810 540,921" fill="none" stroke="#4a5580" stroke-width="1" opacity=".55"/>
<path d="M318 734q49 61 83 114" fill="none" stroke="#8f9cd0" stroke-width=".7" opacity="0.045"/><path d="M238 659q12 25 36 52" fill="none" stroke="#8f9cd0" stroke-width=".7" opacity="0.068"/><path d="M194 694q16 25 48 59" fill="none" stroke="#8f9cd0" stroke-width=".7" opacity="0.090"/><path d="M93 700q58 47 106 105" fill="none" stroke="#8f9cd0" stroke-width=".7" opacity="0.126"/><path d="M64 520q6 25 28 41" fill="none" stroke="#8f9cd0" stroke-width=".7" opacity="0.068"/><path d="M85 573q37 57 73 108" fill="none" stroke="#8f9cd0" stroke-width=".7" opacity="0.068"/><path d="M93 680q34 38 56 83" fill="none" stroke="#8f9cd0" stroke-width=".7" opacity="0.090"/><path d="M212 608q27 37 60 63" fill="none" stroke="#8f9cd0" stroke-width=".7" opacity="0.045"/><path d="M305 834q47 43 99 93" fill="none" stroke="#8f9cd0" stroke-width=".7" opacity="0.090"/><path d="M94 628q44 75 103 136" fill="none" stroke="#8f9cd0" stroke-width=".7" opacity="0.045"/><path d="M383 801q61 49 113 103" fill="none" stroke="#8f9cd0" stroke-width=".7" opacity="0.045"/><path d="M231 595q37 32 59 76" fill="none" stroke="#8f9cd0" stroke-width=".7" opacity="0.068"/><path d="M419 863q50 49 88 106" fill="none" stroke="#8f9cd0" stroke-width=".7" opacity="0.126"/><path d="M55 632q34 66 83 118" fill="none" stroke="#8f9cd0" stroke-width=".7" opacity="0.045"/><path d="M106 599q63 68 112 142" fill="none" stroke="#8f9cd0" stroke-width=".7" opacity="0.045"/><path d="M159 706q49 50 89 96" fill="none" stroke="#8f9cd0" stroke-width=".7" opacity="0.090"/><path d="M247 648q24 28 45 43" fill="none" stroke="#8f9cd0" stroke-width=".7" opacity="0.045"/><path d="M121 707q39 55 80 112" fill="none" stroke="#8f9cd0" stroke-width=".7" opacity="0.045"/><path d="M326 681q54 73 118 130" fill="none" stroke="#8f9cd0" stroke-width=".7" opacity="0.068"/><path d="M322 776q25 20 54 54" fill="none" stroke="#8f9cd0" stroke-width=".7" opacity="0.126"/><path d="M150 564q49 63 94 137" fill="none" stroke="#8f9cd0" stroke-width=".7" opacity="0.126"/><path d="M249 785q39 49 84 100" fill="none" stroke="#8f9cd0" stroke-width=".7" opacity="0.068"/><path d="M57 579q54 77 104 154" fill="none" stroke="#8f9cd0" stroke-width=".7" opacity="0.090"/><path d="M92 526q64 70 120 127" fill="none" stroke="#8f9cd0" stroke-width=".7" opacity="0.090"/><path d="M32 559q65 77 122 158" fill="none" stroke="#8f9cd0" stroke-width=".7" opacity="0.090"/><path d="M248 675q33 47 70 103" fill="none" stroke="#8f9cd0" stroke-width=".7" opacity="0.045"/><path d="M242 742q35 39 77 84" fill="none" stroke="#8f9cd0" stroke-width=".7" opacity="0.090"/><path d="M178 614q46 53 82 111" fill="none" stroke="#8f9cd0" stroke-width=".7" opacity="0.068"/><path d="M352 804q40 60 80 118" fill="none" stroke="#8f9cd0" stroke-width=".7" opacity="0.068"/><path d="M101 601q52 66 117 126" fill="none" stroke="#8f9cd0" stroke-width=".7" opacity="0.126"/><path d="M87 658q70 73 126 153" fill="none" stroke="#8f9cd0" stroke-width=".7" opacity="0.090"/><path d="M368 706q34 38 71 71" fill="none" stroke="#8f9cd0" stroke-width=".7" opacity="0.068"/><path d="M388 888q22 37 59 76" fill="none" stroke="#8f9cd0" stroke-width=".7" opacity="0.068"/><path d="M84 512q38 29 60 58" fill="none" stroke="#8f9cd0" stroke-width=".7" opacity="0.045"/><path d="M212 685q48 53 92 104" fill="none" stroke="#8f9cd0" stroke-width=".7" opacity="0.068"/><path d="M367 793q24 24 33 37" fill="none" stroke="#8f9cd0" stroke-width=".7" opacity="0.045"/><path d="M352 829q41 57 81 120" fill="none" stroke="#8f9cd0" stroke-width=".7" opacity="0.090"/><path d="M279 764q35 54 76 112" fill="none" stroke="#8f9cd0" stroke-width=".7" opacity="0.068"/><path d="M214 671q57 71 119 153" fill="none" stroke="#8f9cd0" stroke-width=".7" opacity="0.126"/><path d="M288 767q30 39 56 83" fill="none" stroke="#8f9cd0" stroke-width=".7" opacity="0.045"/><path d="M195 582q44 46 84 104" fill="none" stroke="#8f9cd0" stroke-width=".7" opacity="0.126"/><path d="M219 680q34 44 69 82" fill="none" stroke="#8f9cd0" stroke-width=".7" opacity="0.126"/><path d="M81 649q31 43 69 93" fill="none" stroke="#8f9cd0" stroke-width=".7" opacity="0.045"/><path d="M163 611q44 65 99 144" fill="none" stroke="#8f9cd0" stroke-width=".7" opacity="0.126"/><path d="M125 594q23 16 35 48" fill="none" stroke="#8f9cd0" stroke-width=".7" opacity="0.090"/><path d="M124 640q17 16 41 43" fill="none" stroke="#8f9cd0" stroke-width=".7" opacity="0.090"/><path d="M150 654q60 72 109 132" fill="none" stroke="#8f9cd0" stroke-width=".7" opacity="0.045"/><path d="M8 648q28 27 56 60" fill="none" stroke="#8f9cd0" stroke-width=".7" opacity="0.090"/><path d="M374 838q16 25 36 43" fill="none" stroke="#8f9cd0" stroke-width=".7" opacity="0.068"/><path d="M18 460q39 38 72 89" fill="none" stroke="#8f9cd0" stroke-width=".7" opacity="0.068"/><path d="M7 562q53 69 99 124" fill="none" stroke="#8f9cd0" stroke-width=".7" opacity="0.126"/><path d="M197 678q49 66 91 119" fill="none" stroke="#8f9cd0" stroke-width=".7" opacity="0.126"/><path d="M388 729q40 51 74 103" fill="none" stroke="#8f9cd0" stroke-width=".7" opacity="0.090"/><path d="M331 796q46 46 92 91" fill="none" stroke="#8f9cd0" stroke-width=".7" opacity="0.126"/><path d="M169 674q30 26 58 67" fill="none" stroke="#8f9cd0" stroke-width=".7" opacity="0.068"/><path d="M136 544q13 30 40 52" fill="none" stroke="#8f9cd0" stroke-width=".7" opacity="0.045"/><path d="M207 742q69 55 127 118" fill="none" stroke="#8f9cd0" stroke-width=".7" opacity="0.045"/><path d="M364 730q36 44 75 99" fill="none" stroke="#8f9cd0" stroke-width=".7" opacity="0.068"/><path d="M211 606q13 20 41 53" fill="none" stroke="#8f9cd0" stroke-width=".7" opacity="0.126"/><path d="M381 726q45 45 88 83" fill="none" stroke="#8f9cd0" stroke-width=".7" opacity="0.068"/>
<rect y="640" width="1909" height="160" fill="url(#fade)"/>
<rect y="800" width="1909" height="121" fill="#04061a"/>
</svg>
<div id="dock">
<svg class="abs" style="left:13px;top:19px" width="26" height="26" viewBox="0 0 26 26"><use href="#i-mon"/></svg>
<svg class="abs" style="left:13px;top:59px" width="26" height="26" viewBox="0 0 26 26"><use href="#i-grid"/></svg>
<div class="abs" style="left:0;top:99px;width:50px;height:1px;background:rgba(255,255,255,.18)"></div>
<div class="abs" style="left:0;top:108px;width:50px;height:40px;background:rgba(255,255,255,.1)"></div>
<div class="abs" style="left:0;top:108px;width:3px;height:40px;background:#2a6ae8"></div>
<svg class="abs" style="left:13px;top:115px" width="26" height="26" viewBox="0 0 50 50"><use href="#i-res"/></svg>
<svg class="abs" style="left:13px;top:163px" width="26" height="26" viewBox="0 0 50 50"><use href="#i-store"/></svg>
<svg class="abs" style="left:15px;top:737px" width="20" height="20" viewBox="0 0 20 20"><circle cx="10" cy="10" r="9.200" fill="#d2d2d2"/><path d="M7.800 14.500v-9L5 8.500M12.200 5.500v9l2.800-3" fill="none" stroke="#15171f" stroke-width="1.700" stroke-linecap="round" stroke-linejoin="round"/></svg>
<svg class="abs" style="left:15px;top:776px" width="20" height="21" viewBox="0 0 20 21"><path d="M10 1.500c-3.500 0-6 2.800-6 6.200v4.300l-2.300 3.200a.8.800 0 0 0 .7 1.300h15.200a.8.800 0 0 0 .7-1.300L16 12V7.700c0-3.400-2.500-6.200-6-6.200z" fill="#d2d2d2"/><path d="M8 18.300a2.200 2.200 0 0 0 4 0z" fill="#d2d2d2"/></svg>
<svg class="abs" style="left:16px;top:816px" width="18" height="19" viewBox="0 0 18 19"><circle cx="9" cy="4.800" r="4" fill="#d2d2d2"/><path d="M.8 18c0-5 3.500-7.500 8.200-7.500s8.200 2.500 8.200 7.500z" fill="#d2d2d2"/></svg>
<svg class="abs" style="left:15px;top:857px" width="20" height="20" viewBox="0 0 20 20"><g fill="#d2d2d2"><rect x="8" y=".5" width="4" height="19" rx="1.200"/><rect x="8" y=".5" width="4" height="19" rx="1.200" transform="rotate(60 10 10)"/><rect x="8" y=".5" width="4" height="19" rx="1.200" transform="rotate(120 10 10)"/><circle cx="10" cy="10" r="7"/></g><circle cx="10" cy="10" r="3" fill="#10121c"/></svg>
</div>
<svg class="ico" style="left:95px;top:39px" viewBox="0 0 50 50"><use href="#i-files"/></svg><div class="lab" style="left:55px;top:105px">文件管理</div>
<svg class="ico" style="left:225px;top:39px" viewBox="0 0 50 50"><use href="#i-log"/></svg><div class="lab" style="left:185px;top:105px">日志</div>
<svg class="ico" style="left:355px;top:39px" viewBox="0 0 50 50"><use href="#i-jdxb"/></svg><div class="lab" style="left:315px;top:105px">节点小宝远程助手</div>
<svg class="ico" style="left:95px;top:163px" viewBox="0 0 50 50"><use href="#i-set"/></svg><div class="lab" style="left:55px;top:229px">系统设置</div>
<svg class="ico" style="left:225px;top:163px" viewBox="0 0 50 50"><use href="#i-trash"/></svg><div class="lab" style="left:185px;top:229px">回收站</div>
<svg class="ico" style="left:355px;top:163px" viewBox="0 0 50 50"><use href="#i-sz"/></svg><div class="lab" style="left:330px;top:229px;text-align:left">神卓NAS公网</div>
<svg class="ico" style="left:95px;top:287px" viewBox="0 0 50 50"><use href="#i-store"/></svg><div class="lab" style="left:55px;top:353px">应用中心</div>
<svg class="ico" style="left:225px;top:287px" viewBox="0 0 50 50"><use href="#i-ol"/></svg><div class="lab" style="left:185px;top:353px">OpenList</div>
<svg class="ico" style="left:355px;top:287px" viewBox="0 0 50 50"><use href="#i-video"/></svg><div class="lab" style="left:315px;top:353px">影视</div>
<svg class="ico" style="left:95px;top:411px" viewBox="0 0 50 50"><use href="#i-dl"/></svg><div class="lab" style="left:55px;top:477px">下载</div>
<svg class="ico" style="left:225px;top:411px" viewBox="0 0 50 50"><use href="#i-bd"/></svg><div class="lab" style="left:185px;top:477px">百度网盘</div>
<svg class="ico" style="left:355px;top:411px" viewBox="0 0 50 50"><use href="#i-photo"/></svg><div class="lab" style="left:315px;top:477px">相册</div>
<svg class="ico" style="left:95px;top:535px" viewBox="0 0 50 50"><use href="#i-docker"/></svg><div class="lab" style="left:55px;top:601px">Docker</div>
<svg class="ico" style="left:225px;top:535px" viewBox="0 0 50 50"><use href="#i-halo"/></svg><div class="lab" style="left:185px;top:601px">Halo</div>
<svg class="ico" style="left:355px;top:535px" viewBox="0 0 50 50"><use href="#i-vm"/></svg><div class="lab" style="left:315px;top:601px">虚拟机</div>
<svg class="ico" style="left:95px;top:659px" viewBox="0 0 50 50"><use href="#i-bak"/></svg><div class="lab" style="left:55px;top:725px">备份</div>
<svg class="ico" style="left:225px;top:659px" viewBox="0 0 50 50"><use href="#i-xl"/></svg><div class="lab" style="left:185px;top:725px">迅雷</div>
<svg class="ico" style="left:95px;top:783px" viewBox="0 0 50 50"><use href="#i-res"/></svg><div class="lab" style="left:55px;top:849px">资源管理</div>
<svg class="ico" style="left:225px;top:783px" viewBox="0 0 50 50"><use href="#i-nvr"/></svg><div class="lab" style="left:185px;top:849px">EasyNVR</div>
<div class="win" id="appc">
<div class="abs" style="left:0;top:0;width:1100px;height:44px;background:#eceff6"></div>
<svg class="abs" style="left:1071px;top:16px" width="12" height="12" viewBox="0 0 12 12"><path d="M1.500 1.500l9 9M10.500 1.500l-9 9" stroke="#7a8190" stroke-width="1.100"/></svg>
<div class="abs" style="left:180px;top:44px;width:920px;height:596px;background:#fff"></div>
<div class="abs" style="left:900px;top:100px;width:180px;height:78px;border:1px solid #e6e9f0;border-radius:10px"></div>
<div class="abs" style="left:900px;top:190px;width:180px;height:78px;border:1px solid #e6e9f0;border-radius:10px"></div>
<div class="abs" style="left:900px;top:280px;width:180px;height:78px;border:1px solid #e6e9f0;border-radius:10px"></div>
<div class="abs" style="left:900px;top:370px;width:180px;height:78px;border:1px solid #e6e9f0;border-radius:10px"></div>
<div class="abs" style="left:200px;top:500px;width:284px;height:38px;border:1px solid #dfe3ea;border-radius:8px"></div>
<svg class="abs" style="left:16px;top:520px" width="16" height="16" viewBox="0 0 16 16"><path d="M8 1.500l5.500 2.800v6.400L8 14 2.500 10.700V4.300zM2.500 4.300L8 7.500l5.500-3.200M8 7.500V14" fill="none" stroke="#5a6473" stroke-width="1.200" stroke-linejoin="round"/></svg>
<span class="abs" style="left:40px;top:518px;font-size:14px;line-height:20px;color:#5a6473">驱动</span>
<div class="abs" style="left:0;top:604px;width:180px;height:1px;background:#e3e7ee"></div>
<svg class="abs" style="left:16px;top:613px" width="16" height="16" viewBox="0 0 16 16"><path d="M8 10.500V2M4.800 5L8 1.800 11.200 5M2 10v3.500h12V10" fill="none" stroke="#5a6473" stroke-width="1.300" stroke-linecap="round" stroke-linejoin="round"/></svg>
<span class="abs" style="left:40px;top:612px;font-size:14px;line-height:20px;color:#3f4754">手动安装</span>
</div>
<div class="win" id="resw">
<svg class="abs" style="left:17px;top:11px" width="22" height="22" viewBox="0 0 50 50"><use href="#i-res"/></svg>
<div class="title">资源管理</div>
<svg class="abs" style="left:978px;top:21px" width="15" height="2" viewBox="0 0 15 2"><path d="M0 1h15" stroke="#1f2329" stroke-width="1.300"/></svg>
<svg class="abs" style="left:1025px;top:16px" width="12" height="12" viewBox="0 0 12 12"><rect x="1" y="1" width="10" height="10" rx=".8" fill="none" stroke="#1f2329" stroke-width="1.300"/></svg>
<svg class="abs" style="left:1071px;top:16px" width="12" height="12" viewBox="0 0 12 12"><path d="M1.200 1.200l9.600 9.600M10.800 1.200l-9.600 9.600" stroke="#1f2329" stroke-width="1.300"/></svg>
<div class="side" style="top:52px"><svg width="16" height="16" viewBox="0 0 16 16"><path d="M2 2v12h12" fill="none" stroke="#5a6473" stroke-width="1.300" stroke-linecap="round"/><path d="M4.800 10.500l2.600-4 2.400 2.400 3.200-4.400" fill="none" stroke="#5a6473" stroke-width="1.300" stroke-linecap="round" stroke-linejoin="round"/></svg>运行状态</div>
<div class="side on" style="top:89px"><svg width="16" height="16" viewBox="0 0 16 16"><g fill="none" stroke="#2a6ae8" stroke-width="1.300" stroke-linejoin="round" stroke-linecap="round"><path d="M8 1.800l6 3-6 3-6-3z"/><path d="M2 8l6 3 6-3"/><path d="M2 11.200l6 3 6-3"/></g></svg>进程管理</div>
<div id="panel">
<div id="tabs"><span style="left:23px;font-weight:bold;color:#1f2329">服务</span><span style="left:83px;color:#8b9cba">进程</span><div class="abs" style="left:20px;top:51px;width:36px;height:2px;background:#2a6ae8"></div></div>
<div id="tbl">
<div class="hd"><span style="left:8px">服务名称</span><span style="left:288px">CPU 占用</span><span style="left:408px">CPU 时间</span><span style="left:528px">内存</span><svg class="abs" style="left:560px;top:13px" width="8" height="13" viewBox="0 0 8 13"><path d="M4 .500l3.500 5h-7zM4 12.500l3.500-5h-7z" fill="#8395b3"/></svg><span style="left:648px">硬盘读取</span><span style="left:768px">硬盘写入</span></div>
<div class="row" style="top:39px"><svg class="tri" width="7" height="11" viewBox="0 0 7 11"><path d="M.800 1l5.400 4.500L.800 10z" fill="#6c7b99"/></svg><svg class="ic" viewBox="0 0 50 50"><use href="#i-set"/></svg><span class="n">系统</span><span class="c1">0%</span><span class="c2">00:00:23</span><span class="c3">106.03MB</span><span class="c4">36 KB/s</span><span class="c5">-</span></div>
<div class="row" style="top:80px"><svg class="tri" width="7" height="11" viewBox="0 0 7 11"><path d="M.800 1l5.400 4.500L.800 10z" fill="#6c7b99"/></svg><svg class="ic" viewBox="0 0 50 50"><use href="#i-bd"/></svg><span class="n">百度网盘</span><span class="c1">0.6%</span><span class="c2">00:00:06</span><span class="c3">51.72MB</span><span class="c4">-</span><span class="c5">-</span></div>
<div class="row" style="top:121px"><svg class="tri" width="7" height="11" viewBox="0 0 7 11"><path d="M.800 1l5.400 4.500L.800 10z" fill="#6c7b99"/></svg><svg class="ic" viewBox="0 0 50 50"><use href="#i-store"/></svg><span class="n">应用中心</span><span class="c1">0%</span><span class="c2">-</span><span class="c3">34.70MB</span><span class="c4">-</span><span class="c5">-</span></div>
<div class="row sel" style="top:162px"><div class="nb"></div><svg class="tri" width="7" height="11" viewBox="0 0 7 11"><path d="M.800 1l5.400 4.500L.800 10z" fill="#6c7b99"/></svg><svg class="ic" viewBox="0 0 50 50"><use href="#i-dl"/></svg><span class="n">下载</span><span class="c1">0%</span><span class="c2">00:00:07</span><span class="c3">29.36MB</span><span class="c4">8 KB/s</span><span class="c5">-</span></div>
<div class="row" style="top:203px"><svg class="tri" width="7" height="11" viewBox="0 0 7 11"><path d="M.800 1l5.400 4.500L.800 10z" fill="#6c7b99"/></svg><svg class="ic" viewBox="0 0 50 50"><use href="#i-video"/></svg><span class="n">影视</span><span class="c1">0.5%</span><span class="c2">00:00:11</span><span class="c3">25.32MB</span><span class="c4">3.8 MB/s</span><span class="c5">32 KB/s</span></div>
<div class="row" style="top:244px"><svg class="tri" width="7" height="11" viewBox="0 0 7 11"><path d="M.800 1l5.400 4.500L.800 10z" fill="#6c7b99"/></svg><svg class="ic" viewBox="0 0 50 50"><use href="#i-photo"/></svg><span class="n">相册</span><span class="c1">0%</span><span class="c2">00:00:06</span><span class="c3">21.10MB</span><span class="c4">-</span><span class="c5">-</span></div>
<div class="row" style="top:285px"><svg class="tri" width="7" height="11" viewBox="0 0 7 11"><path d="M.800 1l5.400 4.500L.800 10z" fill="#6c7b99"/></svg><svg class="ic" viewBox="0 0 50 50"><use href="#i-jdxb"/></svg><span class="n">节点小宝远程助手</span><span class="c1">0%</span><span class="c2">00:00:03</span><span class="c3">21.04MB</span><span class="c4">4 KB/s</span><span class="c5">4 KB/s</span></div>
<div class="row" style="top:326px"><svg class="tri" width="7" height="11" viewBox="0 0 7 11"><path d="M.800 1l5.400 4.500L.800 10z" fill="#6c7b99"/></svg><svg class="ic" viewBox="0 0 50 50"><use href="#i-vm"/></svg><span class="n">虚拟机</span><span class="c1">0%</span><span class="c2">00:00:03</span><span class="c3">14.32MB</span><span class="c4">-</span><span class="c5">-</span></div>
<div class="row" style="top:367px"><svg class="tri" width="7" height="11" viewBox="0 0 7 11"><path d="M.800 1l5.400 4.500L.800 10z" fill="#6c7b99"/></svg><svg class="ic" viewBox="0 0 50 50"><use href="#i-res"/></svg><span class="n">资源管理</span><span class="c1">0.5%</span><span class="c2">00:00:27</span><span class="c3">12.40MB</span><span class="c4">8 KB/s</span><span class="c5">-</span></div>
<div class="row" style="top:408px"><svg class="tri" width="7" height="11" viewBox="0 0 7 11"><path d="M.800 1l5.400 4.500L.800 10z" fill="#6c7b99"/></svg><svg class="ic" viewBox="0 0 50 50"><use href="#i-files"/></svg><span class="n">文件管理</span><span class="c1">0%</span><span class="c2">00:00:01</span><span class="c3">11.72MB</span><span class="c4">-</span><span class="c5">-</span></div>
<div class="row" style="top:449px"><svg class="tri" width="7" height="11" viewBox="0 0 7 11"><path d="M.800 1l5.400 4.500L.800 10z" fill="#6c7b99"/></svg><svg class="ic" viewBox="0 0 50 50"><use href="#i-log"/></svg><span class="n">日志</span><span class="c1">0%</span><span class="c2">00:00:03</span><span class="c3">4.44MB</span><span class="c4">-</span><span class="c5">-</span></div>
<div class="abs" style="left:279px;top:0;width:1px;height:496px;background:#e0e5ee"></div>
<div class="abs" style="left:872px;top:39px;width:7px;height:319px;border-radius:4px;background:#e1e7f1"></div>
</div>
<div class="abs" style="left:20px;top:568px;width:613px;height:8px;border-radius:4px;background:#e1e7f1"></div>
</div>
</div>
<div id="wid">
<div class="card" style="top:6px;height:36px;border-radius:18px">
<svg class="abs" style="left:16px;top:12px" width="14" height="12" viewBox="0 0 14 12"><path d="M.800 1.500h11.400M.800 5.500h11.400M.800 9.500h6.500" stroke="#2b2f38" stroke-width="1.400" stroke-linecap="round"/><circle cx="11" cy="9.700" r="1.400" fill="none" stroke="#2b2f38" stroke-width="1.200"/></svg>
<svg class="abs" style="left:293px;top:12px" width="10" height="12" viewBox="0 0 10 12"><path d="M1.200 5.200L5 1.500l3.800 3.700M1.200 10.200L5 6.500l3.800 3.700" fill="none" stroke="#2b2f38" stroke-width="1.400" stroke-linecap="round" stroke-linejoin="round"/></svg>
</div>
<div class="card" style="top:48px;height:166px">
<div class="h" style="top:16px">运行状态</div>
<div class="t" style="left:16px;top:39px;font-size:13.5px;line-height:20px;color:#1f2329">KSH-NAS</div>
<div class="t" style="left:16px;top:135px;color:#5a6a85">本次运行 <b style="color:#1f2329">0 天 0 时 34 分 37 秒</b></div>
<div class="ring" style="left:167px;top:15px"><svg width="66" height="66"><circle cx="33" cy="33" r="29.500" fill="none" stroke="#edeef2" stroke-width="5.500"/></svg><div>CPU<br>0%</div></div>
<div class="ring" style="left:241px;top:15px"><svg width="66" height="66"><circle cx="33" cy="33" r="29.500" fill="none" stroke="#edeef2" stroke-width="5.500"/><path d="M35.06 3.57A29.5 29.5 0 1 1 8.26 16.93" fill="none" stroke="#df6b1c" stroke-width="5.500" stroke-linecap="round"/></svg><div>内存<br>857.2 MB</div></div>
<div class="ring" style="left:241px;top:85px"><svg width="66" height="66"><circle cx="33" cy="33" r="29.500" fill="none" stroke="#edeef2" stroke-width="5.500"/></svg><div>GPU<br>0%</div></div>
</div>
<div class="card" style="top:220px;height:159px">
<div class="h" style="top:16px">网络</div>
<svg class="abs" style="left:233px;top:20px" width="10" height="11" viewBox="0 0 10 11"><path d="M5 .800l3.400 4H6.200v3H3.800v-3H1.600z" fill="#2a6ae8"/><path d="M1 10h8" stroke="#2a6ae8" stroke-width="1.200"/></svg>
<div class="t" style="right:16px;top:19px;font-weight:bold;color:#2a6ae8;font-size:11.5px">7.6 KB/s</div>
<svg class="abs" style="left:233px;top:42px" width="10" height="11" viewBox="0 0 10 11"><path d="M5 8l3.400-4H6.200V1H3.800v3H1.600z" fill="#4ea64e"/><path d="M1 10h8" stroke="#4ea64e" stroke-width="1.200"/></svg>
<div class="t" style="right:16px;top:41px;font-weight:bold;color:#4ea64e;font-size:11.5px">393.8 KB/s</div>
<svg class="abs" style="left:0;top:0" width="322" height="159" viewBox="0 0 322 159"><defs><linearGradient id="ga" x1="0" y1="0" x2="0" y2="1"><stop offset="0" stop-color="#5fb35f" stop-opacity=".28"/><stop offset="1" stop-color="#5fb35f" stop-opacity=".03"/></linearGradient><linearGradient id="ba" x1="0" y1="0" x2="0" y2="1"><stop offset="0" stop-color="#3b78e7" stop-opacity=".28"/><stop offset="1" stop-color="#3b78e7" stop-opacity=".03"/></linearGradient></defs><path d="M40.4 125.8C41.1 126.5 43.3 129.7 44.8 130.1C46.3 130.1 48.0 129.2 49.8 128.4C51.5 127.6 54.4 125.1 55.8 125.1C57.1 125.9 57.2 130.9 58.1 133.5C59.0 136.0 60.4 140.1 61.4 141.1C62.5 141.1 63.4 141.1 64.8 140.1C66.1 138.1 68.0 130.4 69.8 128.4C71.5 127.8 74.3 127.8 75.8 127.8C77.2 129.5 77.3 137.1 78.8 139.1C80.2 140.1 83.0 140.1 84.8 140.1C86.5 136.7 88.2 119.6 89.8 117.8C91.4 117.8 93.3 126.5 94.8 128.4C96.3 130.1 97.5 128.4 99.1 130.1C100.7 132.1 103.2 141.1 104.8 141.1C106.4 141.0 106.7 131.1 109.1 129.1C111.5 128.4 117.5 128.4 119.8 128.4C122.2 130.4 122.3 141.1 123.8 141.1C125.3 137.9 127.7 112.1 129.2 108.4C130.7 108.4 131.7 113.2 133.2 118.4C134.6 123.7 136.6 140.2 138.2 141.1C139.8 141.1 141.6 126.5 143.2 124.4C144.8 124.4 146.6 128.4 148.2 128.4C149.8 127.1 151.6 115.8 153.2 115.8C154.8 117.6 156.3 136.2 158.2 140.1C160.0 140.1 162.9 140.1 164.9 140.1C166.8 137.5 169.1 126.3 170.5 123.4C172.0 122.4 172.6 122.4 173.9 122.4C175.1 125.1 176.7 137.5 178.2 140.1C179.7 140.1 181.6 140.1 183.2 139.1C184.8 137.1 186.7 127.8 188.2 127.8C189.7 128.3 190.4 140.2 192.5 142.5C194.7 142.5 199.2 142.5 201.5 141.8C203.9 138.6 205.6 123.1 207.2 122.4C208.8 122.4 210.0 137.8 211.6 137.8C213.2 137.0 215.6 117.8 217.2 117.8C218.8 118.0 219.0 136.1 221.6 139.1C224.1 139.1 230.6 136.9 233.2 136.8C235.9 136.8 236.4 138.5 238.2 138.5C240.1 138.5 243.6 136.8 244.9 136.8C246.3 137.3 245.5 141.8 246.6 141.8C247.7 139.4 250.1 121.8 251.6 121.8C253.1 121.8 254.3 141.3 255.9 141.8C257.5 141.8 259.9 125.1 261.6 125.1C263.3 125.2 263.7 139.8 266.6 142.5C269.5 142.5 275.9 142.5 279.9 141.8C283.9 140.1 289.1 135.3 291.6 131.8C294.2 128.3 294.6 120.1 296.0 120.1C297.3 121.6 298.8 138.7 300.0 141.1C301.1 141.1 302.3 137.4 303.3 135.1C304.3 132.8 305.5 128.1 306.0 126.8L306.0 143.1L40.4 143.1Z" fill="url(#ga)"/><path d="M40.4 127.8C41.1 130.1 43.3 140.8 44.8 142.5C46.3 142.5 48.1 142.5 49.8 138.5C51.4 128.5 53.5 80.7 55.1 80.4C56.7 80.4 58.2 126.8 59.8 136.8C61.3 143.1 62.6 142.3 64.8 143.1C66.9 143.1 68.6 141.8 73.1 141.8C77.6 141.8 87.3 143.0 93.1 143.1C99.0 143.1 106.4 143.1 109.8 142.5C113.2 141.8 112.8 139.1 114.1 139.1C115.5 139.2 114.1 142.5 118.5 143.1C128.5 143.1 166.7 143.1 176.5 143.1C179.9 142.8 178.8 141.1 179.9 141.1C180.9 141.1 179.9 142.8 183.2 143.1C192.5 143.1 228.8 143.1 238.2 143.1C242.2 138.5 241.0 114.4 242.2 114.4C243.5 114.4 242.2 138.5 245.9 143.1C251.4 143.1 270.9 143.1 276.6 143.1C281.6 142.1 280.1 137.0 281.6 136.8C283.1 136.8 282.1 140.8 285.9 141.8C289.8 142.8 302.8 142.9 306.0 143.1L306.0 143.1L40.4 143.1Z" fill="url(#ba)"/><path d="M40.4 125.8C41.1 126.5 43.3 129.7 44.8 130.1C46.3 130.1 48.0 129.2 49.8 128.4C51.5 127.6 54.4 125.1 55.8 125.1C57.1 125.9 57.2 130.9 58.1 133.5C59.0 136.0 60.4 140.1 61.4 141.1C62.5 141.1 63.4 141.1 64.8 140.1C66.1 138.1 68.0 130.4 69.8 128.4C71.5 127.8 74.3 127.8 75.8 127.8C77.2 129.5 77.3 137.1 78.8 139.1C80.2 140.1 83.0 140.1 84.8 140.1C86.5 136.7 88.2 119.6 89.8 117.8C91.4 117.8 93.3 126.5 94.8 128.4C96.3 130.1 97.5 128.4 99.1 130.1C100.7 132.1 103.2 141.1 104.8 141.1C106.4 141.0 106.7 131.1 109.1 129.1C111.5 128.4 117.5 128.4 119.8 128.4C122.2 130.4 122.3 141.1 123.8 141.1C125.3 137.9 127.7 112.1 129.2 108.4C130.7 108.4 131.7 113.2 133.2 118.4C134.6 123.7 136.6 140.2 138.2 141.1C139.8 141.1 141.6 126.5 143.2 124.4C144.8 124.4 146.6 128.4 148.2 128.4C149.8 127.1 151.6 115.8 153.2 115.8C154.8 117.6 156.3 136.2 158.2 140.1C160.0 140.1 162.9 140.1 164.9 140.1C166.8 137.5 169.1 126.3 170.5 123.4C172.0 122.4 172.6 122.4 173.9 122.4C175.1 125.1 176.7 137.5 178.2 140.1C179.7 140.1 181.6 140.1 183.2 139.1C184.8 137.1 186.7 127.8 188.2 127.8C189.7 128.3 190.4 140.2 192.5 142.5C194.7 142.5 199.2 142.5 201.5 141.8C203.9 138.6 205.6 123.1 207.2 122.4C208.8 122.4 210.0 137.8 211.6 137.8C213.2 137.0 215.6 117.8 217.2 117.8C218.8 118.0 219.0 136.1 221.6 139.1C224.1 139.1 230.6 136.9 233.2 136.8C235.9 136.8 236.4 138.5 238.2 138.5C240.1 138.5 243.6 136.8 244.9 136.8C246.3 137.3 245.5 141.8 246.6 141.8C247.7 139.4 250.1 121.8 251.6 121.8C253.1 121.8 254.3 141.3 255.9 141.8C257.5 141.8 259.9 125.1 261.6 125.1C263.3 125.2 263.7 139.8 266.6 142.5C269.5 142.5 275.9 142.5 279.9 141.8C283.9 140.1 289.1 135.3 291.6 131.8C294.2 128.3 294.6 120.1 296.0 120.1C297.3 121.6 298.8 138.7 300.0 141.1C301.1 141.1 302.3 137.4 303.3 135.1C304.3 132.8 305.5 128.1 306.0 126.8" fill="none" stroke="#5aad5a" stroke-width="1"/><path d="M40.4 127.8C41.1 130.1 43.3 140.8 44.8 142.5C46.3 142.5 48.1 142.5 49.8 138.5C51.4 128.5 53.5 80.7 55.1 80.4C56.7 80.4 58.2 126.8 59.8 136.8C61.3 143.1 62.6 142.3 64.8 143.1C66.9 143.1 68.6 141.8 73.1 141.8C77.6 141.8 87.3 143.0 93.1 143.1C99.0 143.1 106.4 143.1 109.8 142.5C113.2 141.8 112.8 139.1 114.1 139.1C115.5 139.2 114.1 142.5 118.5 143.1C128.5 143.1 166.7 143.1 176.5 143.1C179.9 142.8 178.8 141.1 179.9 141.1C180.9 141.1 179.9 142.8 183.2 143.1C192.5 143.1 228.8 143.1 238.2 143.1C242.2 138.5 241.0 114.4 242.2 114.4C243.5 114.4 242.2 138.5 245.9 143.1C251.4 143.1 270.9 143.1 276.6 143.1C281.6 142.1 280.1 137.0 281.6 136.8C283.1 136.8 282.1 140.8 285.9 141.8C289.8 142.8 302.8 142.9 306.0 143.1" fill="none" stroke="#3b78e7" stroke-width="1"/></svg>
</div>
<div class="card" style="top:387px;height:158px">
<div class="h" style="top:15px">存储读写</div>
<div class="t" style="right:16px;top:18px;font-weight:bold;color:#2a6ae8;font-size:11.5px">R&nbsp; 0 B/s</div>
<div class="t" style="right:16px;top:40px;font-weight:bold;color:#4ea64e;font-size:11.5px">W 0 B/s</div>
<svg class="abs" style="left:0;top:0" width="322" height="158" viewBox="0 0 322 158"><path d="M39.8 142.3C46.2 142.3 72.6 142.3 79.8 142.3C84.8 142.0 82.7 141.0 84.8 140.9C86.9 140.9 90.9 141.6 93.1 141.6C95.4 141.3 97.1 139.3 98.8 139.3C100.5 139.4 101.2 141.8 103.8 142.3C106.4 142.3 112.5 142.3 114.8 142.3C117.2 142.0 117.3 140.9 118.5 140.9C119.7 140.9 120.7 142.0 122.5 142.3C124.3 142.3 128.1 142.3 129.8 142.3C131.6 140.2 132.3 129.2 133.5 129.2C134.7 129.2 136.4 140.2 137.5 142.3C138.6 142.3 139.3 142.3 140.5 142.3C141.7 140.3 143.8 132.1 145.2 129.9C146.6 128.6 147.9 128.6 149.2 128.6C150.5 130.6 149.2 140.1 153.2 142.3C157.8 142.3 173.5 142.3 178.2 142.3C182.5 139.1 181.1 122.2 182.5 122.2C184.0 122.2 186.0 139.7 187.2 142.3C188.4 142.3 188.9 140.1 189.9 138.3C190.8 136.4 191.9 131.0 193.2 130.9C194.5 130.9 196.9 135.8 198.2 137.6C199.5 139.4 199.1 141.5 201.5 142.3C204.0 142.3 210.7 142.3 213.2 142.3C215.7 141.9 215.9 140.3 217.2 140.3C218.5 140.3 219.5 141.9 221.2 142.3C222.9 142.3 226.2 142.3 227.9 142.3C229.6 140.0 230.6 128.2 231.9 128.2C233.2 128.2 234.9 140.0 235.9 142.3C236.9 142.3 237.3 142.3 238.2 142.3C239.2 141.7 240.4 138.9 241.6 138.9C242.8 138.9 244.2 141.8 245.6 142.3C246.9 142.3 248.3 142.0 249.9 141.6C251.6 141.2 254.6 141.6 255.9 139.9C257.3 137.3 257.4 134.1 258.3 124.9C259.2 115.7 260.5 83.3 261.6 82.2C262.7 82.2 264.0 108.6 264.9 118.2C265.9 127.8 265.7 138.4 267.6 142.3C269.5 142.3 274.5 142.3 276.6 142.3C278.7 140.2 279.6 129.2 280.9 129.2C282.3 129.2 284.1 140.2 285.3 142.3C286.5 142.3 287.3 142.3 288.3 142.3C289.2 142.0 290.2 140.6 291.3 140.6C292.4 140.6 292.6 142.0 295.0 142.3C297.3 142.3 304.2 142.3 306.0 142.3L306.0 142.3L39.8 142.3Z" fill="url(#ba)"/><path d="M39.8 142.3C46.7 142.3 75.5 142.3 83.1 142.3C87.1 142.0 85.8 140.9 87.1 140.9C88.5 140.9 87.1 142.0 91.5 142.3C108.7 142.3 177.8 142.3 194.9 142.3C198.2 142.0 197.1 140.6 198.2 140.6C199.3 140.6 198.2 142.0 201.5 142.3C210.4 142.3 244.3 142.3 253.3 142.3C257.3 142.0 255.9 140.9 257.3 140.9C258.6 140.9 257.3 142.0 261.6 142.3C269.4 142.3 298.9 142.3 306.0 142.3" fill="none" stroke="#5aad5a" stroke-width="1"/><path d="M39.8 142.3C46.2 142.3 72.6 142.3 79.8 142.3C84.8 142.0 82.7 141.0 84.8 140.9C86.9 140.9 90.9 141.6 93.1 141.6C95.4 141.3 97.1 139.3 98.8 139.3C100.5 139.4 101.2 141.8 103.8 142.3C106.4 142.3 112.5 142.3 114.8 142.3C117.2 142.0 117.3 140.9 118.5 140.9C119.7 140.9 120.7 142.0 122.5 142.3C124.3 142.3 128.1 142.3 129.8 142.3C131.6 140.2 132.3 129.2 133.5 129.2C134.7 129.2 136.4 140.2 137.5 142.3C138.6 142.3 139.3 142.3 140.5 142.3C141.7 140.3 143.8 132.1 145.2 129.9C146.6 128.6 147.9 128.6 149.2 128.6C150.5 130.6 149.2 140.1 153.2 142.3C157.8 142.3 173.5 142.3 178.2 142.3C182.5 139.1 181.1 122.2 182.5 122.2C184.0 122.2 186.0 139.7 187.2 142.3C188.4 142.3 188.9 140.1 189.9 138.3C190.8 136.4 191.9 131.0 193.2 130.9C194.5 130.9 196.9 135.8 198.2 137.6C199.5 139.4 199.1 141.5 201.5 142.3C204.0 142.3 210.7 142.3 213.2 142.3C215.7 141.9 215.9 140.3 217.2 140.3C218.5 140.3 219.5 141.9 221.2 142.3C222.9 142.3 226.2 142.3 227.9 142.3C229.6 140.0 230.6 128.2 231.9 128.2C233.2 128.2 234.9 140.0 235.9 142.3C236.9 142.3 237.3 142.3 238.2 142.3C239.2 141.7 240.4 138.9 241.6 138.9C242.8 138.9 244.2 141.8 245.6 142.3C246.9 142.3 248.3 142.0 249.9 141.6C251.6 141.2 254.6 141.6 255.9 139.9C257.3 137.3 257.4 134.1 258.3 124.9C259.2 115.7 260.5 83.3 261.6 82.2C262.7 82.2 264.0 108.6 264.9 118.2C265.9 127.8 265.7 138.4 267.6 142.3C269.5 142.3 274.5 142.3 276.6 142.3C278.7 140.2 279.6 129.2 280.9 129.2C282.3 129.2 284.1 140.2 285.3 142.3C286.5 142.3 287.3 142.3 288.3 142.3C289.2 142.0 290.2 140.6 291.3 140.6C292.4 140.6 292.6 142.0 295.0 142.3C297.3 142.3 304.2 142.3 306.0 142.3" fill="none" stroke="#3b78e7" stroke-width="1"/></svg>
</div>
<div class="card" style="top:553px;height:167px">
<div class="h" style="top:15px">存储空间</div>
<svg class="abs" width="22" height="22" viewBox="0 0 22 22" style="left:16px;top:58px"><path d="M10 2l8 3.500v9L10 18.500 2 14.500v-9z" fill="#9aa3b5"/><path d="M2 5.500l8 3.500v9.500L2 14.500z" fill="#4d586c"/><path d="M10 9l8-3.500v9L10 18.500z" fill="#788398"/><path d="M10 2l8 3.500L10 9 2 5.500z" fill="#c3cad6"/><circle cx="15.500" cy="15.500" r="5" fill="#4caf50"/><path d="M13 15.600l1.800 1.800 3.200-3.400" fill="none" stroke="#fff" stroke-width="1.300" stroke-linecap="round" stroke-linejoin="round"/></svg>
<div class="t" style="left:44px;top:62px;color:#3a4252">存储空间1</div>
<div class="t" style="right:16px;top:55px;font-size:10.3px;color:#30343c">325.44 GB <span style="color:#5a6170">/ 380.51 GB</span></div>
<div class="abs" style="left:197px;top:73px;width:109px;height:10px;border:1px solid #d9dde6;border-radius:3px;background:#fbfbfc"><div style="position:absolute;left:1px;top:1px;width:90px;height:6px;border-radius:3px;background:#2a6ae8"></div></div>
<div class="abs" style="left:16px;top:99px;width:290px;height:1px;background:#e3e7ee"></div>
<svg class="abs" width="22" height="22" viewBox="0 0 22 22" style="left:16px;top:115px"><path d="M10 2l8 3.500v9L10 18.500 2 14.500v-9z" fill="#9aa3b5"/><path d="M2 5.500l8 3.500v9.500L2 14.500z" fill="#4d586c"/><path d="M10 9l8-3.500v9L10 18.500z" fill="#788398"/><path d="M10 2l8 3.500L10 9 2 5.500z" fill="#c3cad6"/><circle cx="15.500" cy="15.500" r="5" fill="#e8192c"/><path d="M15.500 12.600v3.400M15.500 17.600v.6" stroke="#fff" stroke-width="1.400" stroke-linecap="round"/></svg>
<div class="t" style="left:44px;top:119px;color:#3a4252">存储空间2</div>
<div class="t" style="left:103px;top:117px;height:20px;line-height:20px;padding:0 4px;border-radius:4px;background:#fdecee;color:#e0242e">已移除</div>
</div>
</div>
</div>

<div id="chrome">
<div id="tabstrip"><div class="l"></div><div class="r"></div></div>
<svg class="abs" style="left:0px;top:22px" width="18" height="18" viewBox="0 0 18 18"><path d="M15.5 9H3M8 3.8L2.8 9 8 14.2" fill="none" stroke="#222" stroke-width="1.4" stroke-linecap="round" stroke-linejoin="round"/></svg>
<svg class="abs" style="left:31px;top:22px" width="18" height="18" viewBox="0 0 18 18"><path d="M2.5 9H15M10 3.8L15.2 9 10 14.2" fill="none" stroke="#c4c4c4" stroke-width="1.4" stroke-linecap="round" stroke-linejoin="round"/></svg>
<svg class="abs" style="left:64px;top:22px" width="18" height="18" viewBox="0 0 18 18"><path d="M15 9a6 6 0 1 1-2-4.5" fill="none" stroke="#222" stroke-width="1.4" stroke-linecap="round"/><path d="M13.6 1.6v3.4h-3.4" fill="none" stroke="#222" stroke-width="1.4" stroke-linecap="round" stroke-linejoin="round"/></svg>
<svg class="abs" style="left:96px;top:22px" width="18" height="18" viewBox="0 0 18 18"><path d="M2.5 8.2L9 2.4l6.5 5.8v6.3a1 1 0 0 1-1 1h-11a1 1 0 0 1-1-1z" fill="none" stroke="#222" stroke-width="1.4" stroke-linejoin="round"/></svg>
<div id="addr"><div class="pill"></div>
<svg class="abs" style="left:9px;top:8px" width="13" height="12" viewBox="0 0 13 12"><path d="M6.5 1.2L12 10.8H1z" fill="none" stroke="#222" stroke-width="1.2" stroke-linejoin="round"/><path d="M6.5 4.6v3.2M6.5 9v.6" stroke="#222" stroke-width="1.1"/></svg>
<span class="tb" style="left:27px;top:6px;font-size:12.5px;line-height:16px">不安全</span>
<span class="tb" style="left:80px;top:5px;font-size:14px;line-height:18px">100.66.1.4:5666</span>
<svg class="abs" style="left:1469px;top:5px" width="14" height="18" viewBox="0 0 14 18"><path d="M7 1.5a4.2 4.2 0 0 1 4.2 4.2c0 2-1.6 3.2-2.6 4.4L7 15.6l-1.6-5.5C4.400 8.9 2.800 7.700 2.800 5.700A4.200 4.200 0 0 1 7 1.500z" fill="none" stroke="#222" stroke-width="1.2"/><circle cx="7" cy="5.600" r="1" fill="#222"/></svg>
<svg class="abs" style="left:1492px;top:5px" width="18" height="18" viewBox="0 0 18 18"><path d="M9 2l2.100 4.600 5 .6-3.700 3.400 1 4.900L9 13l-4.400 2.500 1-4.900L1.900 7.200l5-.6z" fill="none" stroke="#222" stroke-width="1.3" stroke-linejoin="round"/></svg>
</div>
<svg class="abs" style="left:1706px;top:21px" width="20" height="20" viewBox="0 0 20 20"><path d="M3 6.500h4.200v-1.200a1.800 1.800 0 1 1 3.600 0v1.200H15v4.200h1.200a1.800 1.800 0 1 1 0 3.600H15V17H3v-3.800h1.200a1.700 1.700 0 1 0 0-3.400H3z" fill="none" stroke="#222" stroke-width="1.400" stroke-linejoin="round"/></svg>
<div class="abs" style="left:1738px;top:24px;width:1px;height:14px;background:#d8d8d8"></div>
<svg class="abs" style="left:1751px;top:24px" width="14" height="14" viewBox="0 0 14 14"><g fill="none" stroke="#222" stroke-width="1.200"><circle cx="3.600" cy="3.600" r="2.300"/><circle cx="10.400" cy="3.600" r="2.300"/><circle cx="3.600" cy="10.400" r="2.300"/><circle cx="10.400" cy="10.400" r="2.300"/></g></svg>
<span class="tb" style="left:1771px;top:23px;font-size:12.2px;line-height:16px">网页工具</span>
<div class="abs" style="left:1822px;top:23px;width:16px;height:16px;border-radius:8px;background:#f1f2f4"></div><svg class="abs" style="left:1826px;top:28px" width="8" height="6" viewBox="0 0 8 6"><path d="M1.200 1.200L4 4l2.800-2.800" fill="none" stroke="#222" stroke-width="1.200"/></svg>
<svg class="abs" style="left:1847px;top:21px" width="20" height="20" viewBox="0 0 20 20"><circle cx="10" cy="10" r="9.500" fill="#f3f3f3"/><path d="M1.500 8c.5-3 3-5 5.500-4.500-1 2-1.500 4-1 6.500-1.500.5-3 2-3 4-1.500-1.500-2.300-3.500-2-6z" fill="#1a1a1a"/><path d="M5 14.500c2-1.500 4-1 5 .8 1.200-1.800 3.500-2 5.500-.3-1 2.500-3 4-5.500 4s-4-1.800-5-4.500z" fill="#1a1a1a"/><path d="M13 3.500c2 0 4 1.500 5 4-1-.5-2.500-.3-3.500.5z" fill="#2a2a2a"/><ellipse cx="8" cy="9" rx="1.300" ry="1.700" fill="#1a1a1a"/><ellipse cx="12.500" cy="9" rx="1.300" ry="1.700" fill="#1a1a1a"/></svg>
<svg class="abs" style="left:1880px;top:24px" width="16" height="14" viewBox="0 0 16 14"><path d="M1 2.500h14M1 7h10M1 11.500h7" stroke="#222" stroke-width="1.300" stroke-linecap="round"/></svg>
<div id="bm">
<svg style="left:5px;top:10px" width="12" height="12" viewBox="0 0 12 12"><rect x="1" y="3.2" width="7.2" height="7.2" rx="1.2" fill="none" stroke="#333" stroke-width="1.1"/><path d="M3.6 1.2h6.2a1 1 0 0 1 1 1v6" fill="none" stroke="#333" stroke-width="1.1"/></svg>
<div class="abs" style="left:31px;top:8px;width:1px;height:16px;background:#d0d0d0"></div>
<svg style="left:46px;top:10px" width="13" height="12" viewBox="0 0 13 12"><path d="M1.2 2.2h3.6l1.3 1.4h5.7v6.9H1.2z" fill="none" stroke="#444" stroke-width="1.1" stroke-linejoin="round"/></svg>
<span style="left:65px">品牌方</span>
<svg style="left:116px;top:10px" width="13" height="12" viewBox="0 0 13 12"><path d="M1.2 2.2h3.6l1.3 1.4h5.7v6.9H1.2z" fill="none" stroke="#444" stroke-width="1.1" stroke-linejoin="round"/></svg>
<span style="left:135px">公司</span>
<svg style="left:174px;top:10px" width="13" height="12" viewBox="0 0 13 12"><path d="M1.2 2.2h3.6l1.3 1.4h5.7v6.9H1.2z" fill="none" stroke="#444" stroke-width="1.1" stroke-linejoin="round"/></svg>
<span style="left:193px">监控</span>
<svg style="left:232px;top:10px" width="13" height="12" viewBox="0 0 13 12"><path d="M1.2 2.2h3.6l1.3 1.4h5.7v6.9H1.2z" fill="none" stroke="#444" stroke-width="1.1" stroke-linejoin="round"/></svg>
<span style="left:251px">电影</span>
<svg style="left:290px;top:10px" width="13" height="12" viewBox="0 0 13 12"><path d="M1.2 2.2h3.6l1.3 1.4h5.7v6.9H1.2z" fill="none" stroke="#444" stroke-width="1.1" stroke-linejoin="round"/></svg>
<span style="left:309px">淘宝</span>
<svg style="left:348px;top:10px" width="13" height="12" viewBox="0 0 13 12"><path d="M1.2 2.2h3.6l1.3 1.4h5.7v6.9H1.2z" fill="none" stroke="#444" stroke-width="1.1" stroke-linejoin="round"/></svg>
<span style="left:367px">电脑</span>
<svg style="left:406px;top:10px" width="13" height="12" viewBox="0 0 13 12"><path d="M1.2 2.2h3.6l1.3 1.4h5.7v6.9H1.2z" fill="none" stroke="#444" stroke-width="1.1" stroke-linejoin="round"/></svg>
<span style="left:425px">软件</span>
<svg style="left:464px;top:10px" width="13" height="12" viewBox="0 0 13 12"><path d="M1.2 2.2h3.6l1.3 1.4h5.7v6.9H1.2z" fill="none" stroke="#444" stroke-width="1.1" stroke-linejoin="round"/></svg>
<span style="left:483px">游戏</span>
<svg style="left:522px;top:10px" width="13" height="12" viewBox="0 0 13 12"><path d="M1.2 2.2h3.6l1.3 1.4h5.7v6.9H1.2z" fill="none" stroke="#444" stroke-width="1.1" stroke-linejoin="round"/></svg>
<span style="left:541px">在线工具</span>
<svg style="left:604px;top:10px" width="12" height="12" viewBox="0 0 12 12"><circle cx="6" cy="6" r="5" fill="none" stroke="#666" stroke-width="1"/><path d="M2.5 6.5c1-2 2.2-2 3.3-.6s2.4 1.2 3.6-.6" fill="none" stroke="#666" stroke-width="1"/></svg>
<span style="left:621px">网络面板 - 实时监测...</span>
<svg style="left:759px;top:10px" width="12" height="12" viewBox="0 0 12 12"><circle cx="6" cy="6" r="5" fill="none" stroke="#666" stroke-width="1"/><path d="M2.5 6.5c1-2 2.2-2 3.3-.6s2.4 1.2 3.6-.6" fill="none" stroke="#666" stroke-width="1"/></svg>
<span style="left:776px">AI PPT</span>
<svg style="left:982px;top:10px" width="12" height="12" viewBox="0 0 12 12"><circle cx="6" cy="6" r="5" fill="none" stroke="#666" stroke-width="1"/><path d="M2.5 6.5c1-2 2.2-2 3.3-.6s2.4 1.2 3.6-.6" fill="none" stroke="#666" stroke-width="1"/></svg>
<span style="left:999px">设备管理系统</span>
<svg style="left:1241px;top:10px" width="12" height="12" viewBox="0 0 12 12"><circle cx="6" cy="6" r="5" fill="none" stroke="#666" stroke-width="1"/><path d="M2.5 6.5c1-2 2.2-2 3.3-.6s2.4 1.2 3.6-.6" fill="none" stroke="#666" stroke-width="1"/></svg>
<span style="left:1258px">Steam++ - 主页</span>
<svg style="left:1363px;top:10px" width="12" height="12" viewBox="0 0 12 12"><circle cx="6" cy="6" r="5" fill="none" stroke="#666" stroke-width="1"/><path d="M2.5 6.5c1-2 2.2-2 3.3-.6s2.4 1.2 3.6-.6" fill="none" stroke="#666" stroke-width="1"/></svg>
<span style="left:1380px">3d溜溜网</span>
<svg style="left:1445px;top:10px" width="12" height="12" viewBox="0 0 12 12"><circle cx="6" cy="6" r="5" fill="none" stroke="#666" stroke-width="1"/><path d="M2.5 6.5c1-2 2.2-2 3.3-.6s2.4 1.2 3.6-.6" fill="none" stroke="#666" stroke-width="1"/></svg>
<span style="left:1462px">时代天华|五E课堂|七...</span>
<svg style="left:1600px;top:10px" width="12" height="12" viewBox="0 0 12 12"><circle cx="6" cy="6" r="5" fill="none" stroke="#666" stroke-width="1"/><path d="M2.5 6.5c1-2 2.2-2 3.3-.6s2.4 1.2 3.6-.6" fill="none" stroke="#666" stroke-width="1"/></svg>
<span style="left:1617px">中国奥数网</span>
<svg style="left:829px;top:10px" width="12" height="12" viewBox="0 0 12 12"><circle cx="6" cy="6" r="5.4" fill="#1a8fd8"/><path d="M6 .8a5.2 5.2 0 0 1 5 4.2c-2-1-5-.6-6 1.6-.8-2.6-1-4.6 1-5.8z" fill="#6fd34f"/><circle cx="6.6" cy="7" r="2" fill="#fff"/></svg>
<span style="left:845px">智引生产管理MES系统</span>
<svg style="left:1087px;top:10px" width="12" height="12" viewBox="0 0 12 12"><path d="M6 .6l4.7 2.7v5.4L6 11.4 1.3 8.7V3.3z" fill="#f08a2c"/><circle cx="6" cy="6" r="2.6" fill="#3b8fd6"/></svg>
<span style="left:1103px">GIF在线制作_免费GI...</span>
<svg style="left:1788px;top:11px" width="10" height="10" viewBox="0 0 10 10"><path d="M3.2 1.2L7 5 3.2 8.8" fill="none" stroke="#777" stroke-width="1.1"/></svg>
<div class="abs" style="left:1814px;top:8px;width:1px;height:16px;background:#d0d0d0"></div>
<svg style="left:1829px;top:10px" width="13" height="12" viewBox="0 0 13 12"><path d="M1.2 2.2h3.6l1.3 1.4h5.7v6.9H1.2z" fill="none" stroke="#444" stroke-width="1.1" stroke-linejoin="round"/></svg>
<span style="left:1847px">其他书签</span>
</div>
</div>

<div id="task">
<div class="abs" style="left:234px;top:0;width:48px;height:40px;background:#4b5f68"></div>
<div class="ul" style="left:234px;width:48px"></div><div class="ul" style="left:287px;width:40px"></div><div class="ul" style="left:336px;width:40px"></div><div class="ul" style="left:385px;width:40px"></div>
<svg style="left:5px;top:12px" width="17" height="17" viewBox="0 0 17 17"><path d="M0 2.400L7 1.400v6.700H0zM8 1.250L17 0v8.100H8zM0 9.100h7v6.700L0 14.800zM8 9.100h9V17l-9-1.250z" fill="#fff"/></svg>
<svg style="left:49px;top:8px" width="24" height="24" viewBox="0 0 24 24"><circle cx="14" cy="9.500" r="7.200" fill="none" stroke="#fff" stroke-width="2"/><path d="M9.200 15L2 22.500" stroke="#fff" stroke-width="2.200" stroke-linecap="round"/></svg>
<svg style="left:99px;top:11px" width="20" height="18" viewBox="0 0 20 18"><path d="M1.500 1h11M1.500 17h11M1.500 4.500v9h11v-9zM16 1v2M16 6.500v5M16 15v2" fill="none" stroke="#fff" stroke-width="1.300"/></svg>
<svg style="left:147px;top:8px" width="26" height="26" viewBox="0 0 26 26"><defs><linearGradient id="sw1" x1="0" y1="0" x2="1" y2="1"><stop offset="0" stop-color="#38d23c"/><stop offset=".35" stop-color="#ffd21f"/><stop offset=".6" stop-color="#ff4a3a"/><stop offset="1" stop-color="#b23cf0"/></linearGradient></defs><circle cx="13" cy="13" r="12" fill="url(#sw1)"/><path d="M13 1a12 12 0 0 0-11 8c4-4 10-4 13-1 3 3 2 8-2 9 5 2 11-2 11-8A12 12 0 0 0 13 1z" fill="#2fc7e8" opacity=".75"/><path d="M2 16c1 5 6 9 11 9 5 0 9-3 11-7-3 3-9 4-12 1-3-3-2-7 1-9-5 0-10 2-11 6z" fill="#ff5a2e" opacity=".8"/><circle cx="13" cy="13" r="5.600" fill="#fff"/><circle cx="13" cy="13" r="3" fill="#f3f0ff"/></svg>
<svg style="left:196px;top:11px" width="25" height="18" viewBox="0 0 25 18"><path d="M1 1.500l5.500 15L12.500 5l6 11.500L24 1.500" fill="none" stroke="#ee2a1c" stroke-width="3.400" stroke-linejoin="miter"/><path d="M12.500 5l3 6" stroke="#8a0f08" stroke-width="1.200"/></svg>
<svg style="left:245px;top:8px" width="25" height="25" viewBox="0 0 25 25"><circle cx="12.500" cy="12.500" r="11.800" fill="#fff"/><circle cx="12.500" cy="12.500" r="9.800" fill="#2a62e8"/><circle cx="12.500" cy="12.500" r="5" fill="#fff"/><circle cx="16" cy="14.500" r="2.400" fill="#2a62e8"/></svg>
<svg style="left:295px;top:8px" width="25" height="25" viewBox="0 0 25 25"><rect width="25" height="25" rx="6" fill="#1fc85a"/><ellipse cx="10.500" cy="10.500" rx="6.200" ry="5.200" fill="#fff"/><path d="M6.500 14.200l-1 3 3.200-1.700z" fill="#fff"/><ellipse cx="16" cy="15.200" rx="5" ry="4.200" fill="#e9f9ee" stroke="#1fc85a" stroke-width=".8"/><path d="M18.500 18.500l1 2.300-2.800-1.300z" fill="#e9f9ee"/></svg>
<svg style="left:344px;top:9px" width="25" height="22" viewBox="0 0 25 22"><path d="M1 2.500h8l2 2.500h13v15H1z" fill="#f5b73a"/><path d="M1 7h23v13.500H1z" fill="#ffd659"/><rect x="7" y="13" width="11" height="7.500" fill="#2f8fe6"/><rect x="10" y="17" width="5" height="3.500" fill="#ffd659"/></svg>
<svg style="left:393px;top:8px" width="25" height="25" viewBox="0 0 50 50"><use href="#i-jdxb"/></svg>
<svg style="left:1704px;top:15px" width="16" height="10" viewBox="0 0 16 10"><path d="M2 8.500L8 2.500l6 6" fill="none" stroke="#fff" stroke-width="1.500"/></svg>
<svg style="left:1729px;top:11px" width="18" height="18" viewBox="0 0 18 18"><g fill="none" stroke="#c9d2d8" stroke-width="1.200"><path d="M3 13.500A10.500 10.500 0 0 1 13.500 3"/><path d="M6.200 14A7.300 7.300 0 0 1 13.500 6.400"/><path d="M9.400 14.400a4.200 4.200 0 0 1 4.200-4.500"/></g><circle cx="13.500" cy="14.500" r="1.500" fill="#fff"/></svg>
<svg style="left:1752px;top:11px" width="18" height="18" viewBox="0 0 18 18"><path d="M1.500 6.500h3L8.500 3v12l-4-3.500h-3z" fill="none" stroke="#fff" stroke-width="1.200" stroke-linejoin="round"/><path d="M11 6.500a3.500 3.500 0 0 1 0 5" fill="none" stroke="#fff" stroke-width="1.100"/><path d="M13 4.500a6.500 6.500 0 0 1 0 9" fill="none" stroke="#9fb0b8" stroke-width="1.100"/><path d="M15 2.700a9 9 0 0 1 0 12.600" fill="none" stroke="#6f848e" stroke-width="1.100"/></svg>
<span class="abs" style="left:1778px;top:8px;font-family:'Liberation Serif',serif;font-size:20px;line-height:22px;color:#fff">A</span>
<svg style="left:1803px;top:10px" width="19" height="19" viewBox="0 0 19 19"><path d="M3 2.500h13.500a2 2 0 0 1 1.900 2.600l-3 10a2.500 2.500 0 0 1-2.400 1.900H2.500A2 2 0 0 1 .6 14.400l3-10A2.500 2.500 0 0 1 3 2.500z" fill="#23b020"/><path d="M13.800 5.500H8.300c-2.600 0-3 3.500-.6 4l2.400.5c1 .2.800 1.500-.2 1.500H4.600l-.5 1.800h6.300c2.900 0 3.300-4 .6-4.600L8.700 8.200c-.9-.2-.7-1.100.1-1.100h4.500z" fill="#fff"/></svg>
<div class="abs" style="left:1832px;top:3px;width:70px;text-align:center;font-size:12.5px;line-height:16px;color:#fff">11:06</div>
<div class="abs" style="left:1832px;top:22px;width:70px;text-align:center;font-size:12.5px;letter-spacing:.3px;line-height:16px;color:#fff">2025/12/5</div>
<div class="abs" style="left:1904px;top:0;width:1px;height:40px;background:#6a7a84"></div>
</div>
</body>
</html>
